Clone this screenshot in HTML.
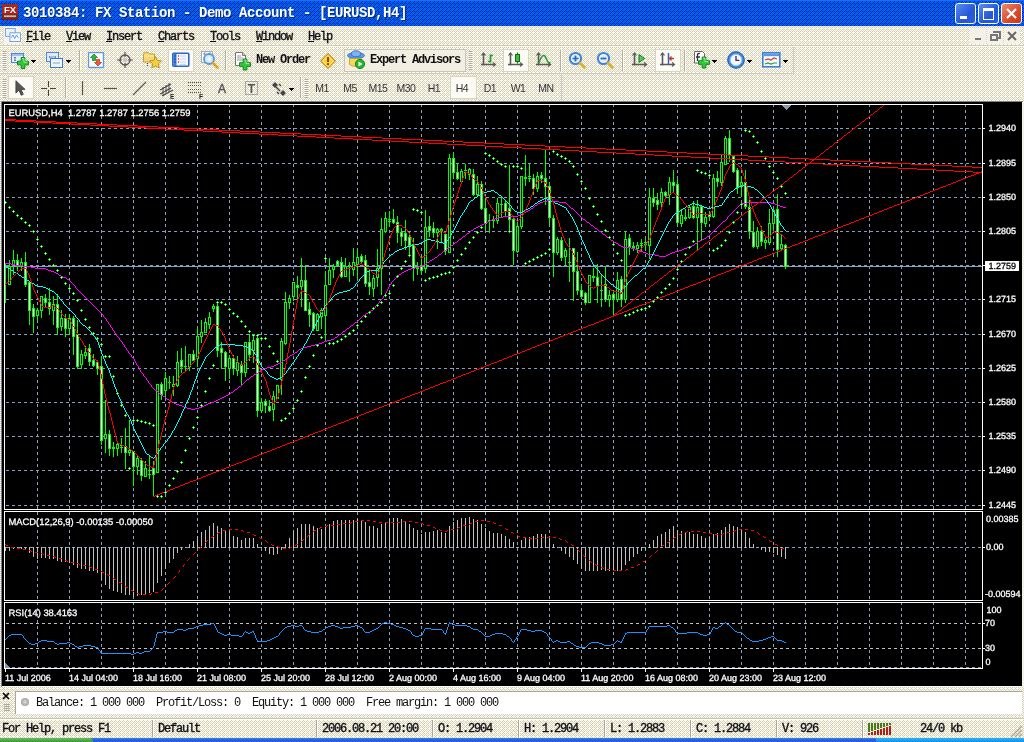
<!DOCTYPE html>
<html><head><meta charset="utf-8"><title>FX Station</title>
<style>
html,body{margin:0;padding:0}
body{width:1024px;height:742px;overflow:hidden;position:relative;background:#ece9d8;font-family:"Liberation Mono",monospace;color:#000}
.abs{position:absolute}
#title{left:0;top:0;width:1024px;height:26px;background:linear-gradient(#3468f4 0,#0a52ea 2px,#034ae6 6px,#0248e2 21px,#0242d4 26px)}
#title .t{left:23px;top:5px;font:bold 14px "Liberation Mono",monospace;letter-spacing:-.4px;color:#fff;white-space:pre;text-shadow:1px 1px 0 #0a2a80}
.wb{top:3px;width:19px;height:19px;border:1px solid #fff;border-radius:3px;background:linear-gradient(135deg,#5d8df0,#2456d8 60%,#2a5ee0)}
.wb.c{background:linear-gradient(135deg,#ee8a6c,#d8492a 60%,#c8381c)}
#menu{left:0;top:26px;width:1024px;height:20px}
#menu span{position:absolute;top:4px;font:12px "Liberation Mono",monospace;letter-spacing:-1.2px;white-space:pre;color:#111;-webkit-text-stroke:.35px #111}
#menu u{text-decoration:underline}
.sepl{left:0;width:1024px;height:1px;background:#fbfaf4}
.sepd{left:0;width:1024px;height:1px;background:#cfcbb8}
.vs{width:1px;height:20px;background:#b5b19f;box-shadow:1px 0 0 #fbfaf4}
.grip{width:3px;height:18px;background:repeating-linear-gradient(#b0ac99 0,#b0ac99 1px,#f8f6ee 1px,#f8f6ee 2px)}
.tx{font:bold 12px "Liberation Mono",monospace;letter-spacing:-1.2px;white-space:pre;color:#111}
.pf{font:10.5px "Liberation Sans",sans-serif;color:#333;white-space:pre}
.press{background:#fcfbf4;border:1px solid #d8d4c4;box-sizing:border-box}
.st{top:722px;font:12px "Liberation Mono",monospace;letter-spacing:-1.2px;white-space:pre;color:#111;-webkit-text-stroke:.35px #111}
.sv{top:720px;width:1px;height:17px;background:#aca899;box-shadow:1px 0 0 #fff}
</style></head><body>
<div id="wrap" style="position:absolute;left:0;top:0;width:1024px;height:742px;will-change:transform">
<svg class="abs" style="left:0;top:0" width="1024" height="742" shape-rendering="crispEdges"><defs><pattern id="dz" x="2" y="0" width="4" height="4" patternUnits="userSpaceOnUse"><rect width="4" height="4" fill="#ccc"/><path d="M0 0h1v1h-1zM2 0h1v1h-1zM0 2h1v1h-1zM2 2h1v1h-1z" fill="#fff"/><path d="M3 0h1v2h-1zM1 1h1v1h-1zM1 3h1v1h-1zM3 3h1v1h-1z" fill="#ffc"/><path d="M1 2h1v1h-1z" fill="#fcc"/></pattern></defs><rect width="1024" height="742" fill="url(#dz)"/></svg>
<div id="title" class="abs">
<svg class="abs" style="left:0;top:0" width="1024" height="26" shape-rendering="crispEdges"><defs><pattern id="tz" x="0" y="1" width="4" height="4" patternUnits="userSpaceOnUse"><rect width="4" height="4" fill="#06f"/><path d="M2 0h1v1h-1zM1 1h1v1h-1zM0 2h1v1h-1zM2 2h1v1h-1zM3 3h1v1h-1z" fill="#0020cc"/><path d="M0 0h1v1h-1zM3 1h1v1h-1zM1 2h1v2h-1z" fill="#0066a8"/></pattern></defs><rect y="1" width="1024" height="25" fill="url(#tz)"/><rect width="1024" height="1" fill="#1a6cff"/><path d="M0 0h1v1h-1z" fill="#66f"/></svg>
 <svg class="abs" style="left:2px;top:4px" width="16" height="16" viewBox="0 0 17 17"><rect width="17" height="17" fill="#7a1d16"/><rect x="0" y="0" width="17" height="11" fill="#a8281c"/><text x="8.5" y="9.5" font-family="Liberation Sans" font-weight="bold" font-size="10" fill="#fff" text-anchor="middle">FX</text><rect x="2" y="12" width="13" height="2" fill="#c9b8b4"/></svg>
 <div class="abs t">3010384: FX Station - Demo Account - [EURUSD,H4]</div>
 <div class="abs wb" style="left:955px"><div class="abs" style="left:4px;top:12px;width:7px;height:3px;background:#fff"></div></div>
 <div class="abs wb" style="left:978px"><div class="abs" style="left:4px;top:4px;width:9px;height:8px;border:1px solid #fff;border-top-width:3px"></div></div>
 <div class="abs wb c" style="left:1001px"><svg width="19" height="19"><path d="M5 5l9 9M14 5l-9 9" stroke="#fff" stroke-width="2.2"/></svg></div>
</div>
<div id="menu" class="abs">
 <div class="abs" style="left:4px;top:1px;width:17px;height:17px;background:#f6f4ec"></div><svg class="abs" style="left:5px;top:2px" width="16" height="14" viewBox="0 0 18 16"><rect x=".5" y=".5" width="11" height="9" fill="#eaf2fc" stroke="#6a9ad8"/><rect x="5.500" y="5.500" width="12" height="10" fill="#f4f8ff" stroke="#6a9ad8"/><path d="M7 11l2-3 2 4 2-4 2 3" stroke="#5a8ad0" fill="none"/></svg>
 <span style="left:26px"><u>F</u>ile</span><span style="left:66px"><u>V</u>iew</span><span style="left:106px"><u>I</u>nsert</span><span style="left:158px"><u>C</u>harts</span><span style="left:210px"><u>T</u>ools</span><span style="left:256px"><u>W</u>indow</span><span style="left:308px"><u>H</u>elp</span>
 <svg class="abs" style="left:968px;top:1px" width="54" height="18" viewBox="0 0 54 18" shape-rendering="crispEdges"><rect x="2" y="1" width="16" height="16" fill="#f4f2e8"/><rect x="19" y="1" width="16" height="16" fill="#f4f2e8"/><rect x="36" y="1" width="16" height="16" fill="#f4f2e8"/><rect x="7" y="11" width="6" height="2" fill="#777"/><path d="M25 5h7v6h-2M23 8h6v5h-6z" fill="none" stroke="#777" stroke-width="1.6"/><path d="M40 5l8 8M48 5l-8 8" stroke="#666" stroke-width="2" shape-rendering="auto"/></svg>
</div>
<div class="abs sepd" style="top:45px"></div><div class="abs sepl" style="top:46px"></div>
<div id="tb1" class="abs" style="left:0;top:47px;width:1024px;height:26px"><div class="abs grip" style="left:3px;top:4px;height:19px"></div><svg class="abs" style="left:11px;top:5px" width="19" height="18" viewBox="0 0 19 18"><rect x=".5" y="1.500" width="12" height="9" fill="#e4effb" stroke="#4c88da"/><rect x="1" y="2" width="11" height="2" fill="#9cc2f0"/><path d="M4 5v4M3 6l1-1 1 1M3 8l1 1 1-1" stroke="#6b7f99" fill="none"/><path transform="translate(6.5 5.5) scale(0.92)" d="M4 0h4v4h4v4h-4v4h-4v-4h-4v-4h4z" fill="#2fca3a" stroke="#0b7d16" stroke-width="1" stroke-linejoin="round"/><path transform="translate(6.5 5.5) scale(0.92)" d="M5 1.200h2v3.800h3.800" fill="none" stroke="#a8f0a8" stroke-width="1"/></svg><svg class="abs" style="left:31px;top:13px" width="5" height="3" shape-rendering="crispEdges"><path d="M0 0h5v1h-5zM1 1h3v1h-3zM2 2h1v1h-1z" fill="#000"/></svg><svg class="abs" style="left:46px;top:5px" width="18" height="18" viewBox="0 0 18 18"><rect x=".5" y=".5" width="12" height="9" fill="#dfeaf8" stroke="#4c88da"/><path d="M3 5h7M3 5l1-1M3 5l1 1M10 5l-1-1M10 5l-1 1" stroke="#7a8eaa" fill="none"/><rect x="4.500" y="6.500" width="12" height="9" fill="#eef4fc" stroke="#3f7ad2"/><path d="M7 11h7" stroke="#8aa0c0"/></svg><svg class="abs" style="left:66px;top:13px" width="5" height="3" shape-rendering="crispEdges"><path d="M0 0h5v1h-5zM1 1h3v1h-3zM2 2h1v1h-1z" fill="#000"/></svg><div class="abs vs" style="left:79px;top:3px;height:21px"></div><svg class="abs" style="left:88px;top:5px" width="17" height="17" viewBox="0 0 17 17"><rect x=".5" y=".5" width="15" height="15" rx="1" fill="#fff" stroke="#5b99e4" stroke-width="1.400"/><path d="M6 2l3.500 3.500h-2v3h-3v-3h-2z" fill="#2fb93a" stroke="#127a1c" stroke-width=".7"/><path d="M10 14l-3.500-3.500h2v-3h3v3h2z" fill="#ee5a3a" stroke="#b0301a" stroke-width=".7"/></svg><svg class="abs" style="left:116px;top:4px" width="18" height="18" viewBox="0 0 18 18"><circle cx="9" cy="9" r="5" fill="none" stroke="#555" stroke-width="1.300"/><path d="M9 1v5M9 12v5M1 9h5M12 9h5" stroke="#555" stroke-width="1.200"/><circle cx="9" cy="9" r="2.200" fill="#c8c8c0"/></svg><svg class="abs" style="left:143px;top:4px" width="20" height="19" viewBox="0 0 20 19"><path d="M.5 3.500q0-2 2-2h3l1.500 1.500h4.500v8h-11z" fill="#f7d774" stroke="#c9a030"/><path d="M1 5h10" stroke="#fbeeb0"/><path d="M4.500 12v4" stroke="#555" stroke-dasharray="1 1"/><path d="M12.500 5.500l1.800 3.900 4.200.5-3.100 2.900.8 4.200-3.700-2.100-3.700 2.100.8-4.200-3.100-2.900 4.200-.5z" fill="#f4cf45" stroke="#b98f1c" stroke-width=".9"/></svg><div class="abs press" style="left:168px;top:2px;width:26px;height:23px"></div><svg class="abs" style="left:172px;top:5px" width="18" height="16" viewBox="0 0 18 16"><rect x=".8" y="1.300" width="16" height="13" rx="1" fill="#f3f7ff" stroke="#2c66cc" stroke-width="1.600"/><rect x="1.500" y="2" width="3" height="12" fill="#3b7bdb"/><path d="M6 4h1M6 7h1M6 10h1" stroke="#e02020" stroke-width="1.300"/><path d="M8.500 4h6M8.500 7h6M8.500 10h6M8.500 12.500h6" stroke="#9cbcf0" stroke-dasharray="1 1"/><path d="M2.500 4h1M2.500 7h1M2.500 10h1" stroke="#123" /></svg><svg class="abs" style="left:200px;top:3px" width="20" height="20" viewBox="0 0 20 20"><rect x="1.500" y="1.500" width="11" height="11" fill="#fcfcfc" stroke="#aaa"/><path d="M3 4h2v-2M10 2v3h2M4 3l1 2M9 3l1 2" stroke="#7a8aa0" fill="none" stroke-width=".8"/><circle cx="9" cy="9" r="5" fill="#cfe5f8" fill-opacity=".85" stroke="#5a9ad8" stroke-width="1.800"/><circle cx="9" cy="9" r="2" fill="#eef6fd"/><path d="M13 13l4.500 4.500" stroke="#d9a521" stroke-width="2.600" stroke-linecap="round"/></svg><div class="abs vs" style="left:225px;top:3px;height:21px"></div><svg class="abs" style="left:234px;top:5px" width="19" height="20" viewBox="0 0 19 20"><path d="M1.500 .5h7l3 3v10h-10z" fill="#fff" stroke="#777"/><path d="M8.500 .5v3h3" fill="#ddd" stroke="#777"/><path d="M3 4h4M3 6h6M3 8h6" stroke="#999"/><path transform="translate(5.5 7) scale(0.92)" d="M4 0h4v4h4v4h-4v4h-4v-4h-4v-4h4z" fill="#2fca3a" stroke="#0b7d16" stroke-width="1" stroke-linejoin="round"/><path transform="translate(5.5 7) scale(0.92)" d="M5 1.200h2v3.800h3.800" fill="none" stroke="#a8f0a8" stroke-width="1"/></svg><div class="abs tx" style="left:256px;top:6px">New Order</div><div class="abs" style="left:320px;top:6px;width:16px;height:16px"><svg class="abs" style="left:0px;top:0px" width="16" height="16" viewBox="0 0 16 16"><g transform="scale(.89)"><path d="M9 .8l8.200 8.200-8.200 8.200-8.200-8.200z" fill="#f9d235" stroke="#c8911a" stroke-width="1.200"/><path d="M9 3l6 6-6 6-6-6z" fill="none" stroke="#fdeea0" stroke-width=".8"/><path d="M9 4.500v5.500" stroke="#7a3d10" stroke-width="2"/><circle cx="9" cy="12.500" r="1.200" fill="#7a3d10"/></g></svg></div><div class="abs" style="left:344px;top:2px;width:122px;height:23px;border:1px solid #c9c5b4;box-sizing:border-box;background:#f1eee2"></div><svg class="abs" style="left:347px;top:3px" width="19" height="20" viewBox="0 0 19 20"><ellipse cx="9" cy="5.500" rx="8.500" ry="3" fill="#5a9be6" stroke="#2c66c0" stroke-width=".8"/><ellipse cx="9" cy="3.800" rx="4.500" ry="3" fill="#7db4f0" stroke="#2c66c0" stroke-width=".8"/><path d="M2.500 8.500h12v6q-6 4-12 0z" fill="#f7d65a" stroke="#c79a1e" stroke-width=".8"/><circle cx="13" cy="14" r="4.600" fill="#22b82e" stroke="#0d7a16" stroke-width=".9"/><path d="M11.500 11.500l4 2.500-4 2.500z" fill="#fff"/></svg><div class="abs tx" style="left:370px;top:6px">Expert Advisors</div><div class="abs grip" style="left:469px;top:4px;height:19px"></div><svg class="abs" style="left:481px;top:5px" width="16" height="16" viewBox="0 0 16 16"><path d="M2.500 1v12.500M0 12.500h14" stroke="#5a5a5a" stroke-width="1.600" fill="none"/><path d="M0.500 3.500l2-2.500 2 2.500M12 10.500l2.500 2-2.500 2" stroke="#5a5a5a" fill="none" stroke-width="1.200"/><path d="M9.500 2.500v8M9.500 3.500h2.500M7 9.500h2.500" stroke="#1f9d27" stroke-width="1.700" fill="none"/></svg><div class="abs press" style="left:503px;top:2px;width:26px;height:23px"></div><svg class="abs" style="left:508px;top:5px" width="16" height="16" viewBox="0 0 16 16"><path d="M2.500 1v12.500M0 12.500h14" stroke="#5a5a5a" stroke-width="1.600" fill="none"/><path d="M0.500 3.500l2-2.500 2 2.500M12 10.500l2.500 2-2.500 2" stroke="#5a5a5a" fill="none" stroke-width="1.200"/><path d="M9.500 .5v11" stroke="#0d6f14" stroke-width="1.200"/><rect x="7.500" y="2.500" width="4" height="7" fill="#36c43e" stroke="#0d6f14"/></svg><svg class="abs" style="left:536px;top:5px" width="16" height="16" viewBox="0 0 16 16"><path d="M2.500 1v12.500M0 12.500h14" stroke="#5a5a5a" stroke-width="1.600" fill="none"/><path d="M0.500 3.500l2-2.500 2 2.500M12 10.500l2.500 2-2.500 2" stroke="#5a5a5a" fill="none" stroke-width="1.200"/><path d="M3 11q4-12 7-5t4 4" stroke="#1f9d27" stroke-width="1.500" fill="none"/></svg><div class="abs vs" style="left:560px;top:3px;height:21px"></div><svg class="abs" style="left:568px;top:4px" width="19" height="19" viewBox="0 0 19 19"><circle cx="7.500" cy="7.500" r="5.600" fill="#d5eafc" stroke="#3f83d6" stroke-width="2"/><circle cx="7.500" cy="7.500" r="3.800" fill="none" stroke="#fff" stroke-width=".8"/><path d="M4.500 7.500h6M7.500 4.500v6" stroke="#2c66c0" stroke-width="1.700"/><path d="M12 12l4.500 4.500" stroke="#e2b02a" stroke-width="2.800" stroke-linecap="round"/></svg><svg class="abs" style="left:596px;top:4px" width="19" height="19" viewBox="0 0 19 19"><circle cx="7.500" cy="7.500" r="5.600" fill="#d5eafc" stroke="#3f83d6" stroke-width="2"/><circle cx="7.500" cy="7.500" r="3.800" fill="none" stroke="#fff" stroke-width=".8"/><path d="M4.500 7.500h6" stroke="#2c66c0" stroke-width="1.700"/><path d="M12 12l4.500 4.500" stroke="#e2b02a" stroke-width="2.800" stroke-linecap="round"/></svg><div class="abs vs" style="left:622px;top:3px;height:21px"></div><svg class="abs" style="left:632px;top:5px" width="16" height="16" viewBox="0 0 16 16"><path d="M2.500 1v12.500M0 12.500h14" stroke="#5a5a5a" stroke-width="1.600" fill="none"/><path d="M0.500 3.500l2-2.500 2 2.500M12 10.500l2.500 2-2.500 2" stroke="#5a5a5a" fill="none" stroke-width="1.200"/><path d="M7 2.500l5.500 4-5.500 4z" fill="#4fcf57" stroke="#0d7a16" stroke-width="1"/></svg><div class="abs press" style="left:655px;top:2px;width:26px;height:23px"></div><svg class="abs" style="left:660px;top:5px" width="16" height="16" viewBox="0 0 16 16"><path d="M2.500 1v12.500M0 12.500h14" stroke="#5a5a5a" stroke-width="1.600" fill="none"/><path d="M0.500 3.500l2-2.500 2 2.500M12 10.500l2.500 2-2.500 2" stroke="#5a5a5a" fill="none" stroke-width="1.200"/><path d="M8.500 1v11" stroke="#2c66c0" stroke-width="1.500"/><path d="M14 6.500h-4.500M11.500 4.500l-2 2 2 2" stroke="#d03818" stroke-width="1.300" fill="none"/></svg><div class="abs vs" style="left:684px;top:3px;height:21px"></div><svg class="abs" style="left:693px;top:3px" width="19" height="20" viewBox="0 0 19 20"><path d="M1.500 1.500h8l2 2v9.500h-10z" fill="#fff" stroke="#666"/><path d="M4.500 11v-6q0-2 2.500-1.500M3 7h4" stroke="#333" fill="none" stroke-width="1.300"/><path transform="translate(5.5 7) scale(0.92)" d="M4 0h4v4h4v4h-4v4h-4v-4h-4v-4h4z" fill="#2fca3a" stroke="#0b7d16" stroke-width="1" stroke-linejoin="round"/><path transform="translate(5.5 7) scale(0.92)" d="M5 1.200h2v3.800h3.800" fill="none" stroke="#a8f0a8" stroke-width="1"/></svg><svg class="abs" style="left:712px;top:13px" width="5" height="3" shape-rendering="crispEdges"><path d="M0 0h5v1h-5zM1 1h3v1h-3zM2 2h1v1h-1z" fill="#000"/></svg><svg class="abs" style="left:727px;top:4px" width="19" height="19" viewBox="0 0 19 19"><circle cx="9" cy="9" r="8.300" fill="#3f86de" stroke="#1d55b4" stroke-width="1"/><circle cx="9" cy="9" r="5.800" fill="#f4f8fd" stroke="#9cc4f2" stroke-width="1"/><path d="M9 5v4.300h3.300" stroke="#333" stroke-width="1.300" fill="none"/></svg><svg class="abs" style="left:747px;top:13px" width="5" height="3" shape-rendering="crispEdges"><path d="M0 0h5v1h-5zM1 1h3v1h-3zM2 2h1v1h-1z" fill="#000"/></svg><svg class="abs" style="left:762px;top:5px" width="19" height="16" viewBox="0 0 19 16"><rect x=".8" y=".8" width="17" height="14" fill="#f2f7fd" stroke="#3f7fd8" stroke-width="1.600"/><rect x="1.600" y="1.600" width="15.500" height="2.500" fill="#5c9ae6"/><path d="M3 8l3-1 3 1 3-2 3 1" stroke="#d04028" fill="none" stroke-width="1.200"/><path d="M3 12l3-1 3 1 3-1 3 0" stroke="#2a9a34" fill="none" stroke-width="1.200"/></svg><svg class="abs" style="left:783px;top:13px" width="5" height="3" shape-rendering="crispEdges"><path d="M0 0h5v1h-5zM1 1h3v1h-3zM2 2h1v1h-1z" fill="#000"/></svg><div class="abs" style="left:793px;top:0;width:1px;height:26px;background:#cfcbb8"></div></div>
<div class="abs sepd" style="top:73px;width:794px"></div>
<div id="tb2" class="abs" style="left:0;top:74px;width:1024px;height:27px"><div class="abs grip" style="left:3px;top:5px;height:19px"></div><div class="abs press" style="left:8px;top:2px;width:26px;height:23px"></div><svg class="abs" style="left:14px;top:6px" width="12" height="17" viewBox="0 0 12 17"><path d="M2 .8v13l3.200-3 2.400 5.300 2.200-1-2.400-5.200h4.300z" fill="#555" stroke="#333" stroke-width=".8" transform="scale(.95)"/></svg><svg class="abs" style="left:40px;top:6px" width="17" height="17" viewBox="0 0 17 17"><path d="M8.500 1v6M8.500 10v6M1 8.500h6M10 8.500h6" stroke="#444" stroke-width="1.100"/></svg><div class="abs vs" style="left:65px;top:3px;height:21px"></div><svg class="abs" style="left:78px;top:6px" width="9" height="17" viewBox="0 0 9 17"><path d="M4.500 1v14" stroke="#555" stroke-width="1.200"/></svg><svg class="abs" style="left:103px;top:11px" width="16" height="7" viewBox="0 0 16 7"><path d="M1 3.500h13" stroke="#555" stroke-width="1.200"/></svg><svg class="abs" style="left:132px;top:7px" width="16" height="15" viewBox="0 0 16 15"><path d="M1 14l13-13" stroke="#555" stroke-width="1.300"/></svg><svg class="abs" style="left:158px;top:6px" width="20" height="20" viewBox="0 0 20 20"><path d="M2 10l11-6M2 14l11-6M4 16l11-6" stroke="#444" stroke-width="1.100"/><path d="M5 7v9M8 5v9M11 3v9" stroke="#444" stroke-width=".9"/><text x="12" y="18.500" font-family="Liberation Sans" font-weight="bold" font-size="6.500" fill="#222">E</text></svg><svg class="abs" style="left:187px;top:7px" width="20" height="19" viewBox="0 0 20 19"><path d="M1 1.500h13M1 4.500h13M1 8.500h13M1 11.500h13" stroke="#555" stroke-width="1" stroke-dasharray="1 1"/><text x="12" y="17.500" font-family="Liberation Sans" font-weight="bold" font-size="6.500" fill="#222">F</text></svg><div class="abs" style="left:218px;top:8px;font:12px 'Liberation Sans',sans-serif;color:#555;-webkit-text-stroke:.4px #555">A</div><svg class="abs" style="left:245px;top:7px" width="13" height="14" viewBox="0 0 13 14"><rect x=".5" y=".5" width="12" height="13" fill="none" stroke="#666" stroke-dasharray="1 1"/><text x="6.500" y="11.500" text-anchor="middle" font-family="Liberation Sans" font-weight="bold" font-size="12" fill="#555">T</text></svg><svg class="abs" style="left:271px;top:8px" width="16" height="14" viewBox="0 0 16 14"><path d="M4 0l3 3-3 3-3-3zM12 8l3 3-3 3-3-3z" fill="#444"/><path d="M5 5l4 4M8 2l2 2M6 10l2 2" stroke="#444" stroke-width="1.500"/></svg><svg class="abs" style="left:289px;top:14px" width="5" height="3" shape-rendering="crispEdges"><path d="M0 0h5v1h-5zM1 1h3v1h-3zM2 2h1v1h-1z" fill="#000"/></svg><div class="abs vs" style="left:300px;top:3px;height:21px"></div><div class="abs grip" style="left:305px;top:5px;height:19px"></div><div class="abs pf" style="left:308px;top:8px;width:28px;text-align:center;letter-spacing:-.5px">M1</div><div class="abs pf" style="left:336px;top:8px;width:28px;text-align:center;letter-spacing:-.5px">M5</div><div class="abs pf" style="left:364px;top:8px;width:28px;text-align:center;letter-spacing:-.5px">M15</div><div class="abs pf" style="left:392px;top:8px;width:28px;text-align:center;letter-spacing:-.5px">M30</div><div class="abs pf" style="left:420px;top:8px;width:28px;text-align:center;letter-spacing:-.5px">H1</div><div class="abs press" style="left:450px;top:2px;width:27px;height:23px"></div><div class="abs pf" style="left:448px;top:8px;width:28px;text-align:center;letter-spacing:-.5px">H4</div><div class="abs pf" style="left:476px;top:8px;width:28px;text-align:center;letter-spacing:-.5px">D1</div><div class="abs pf" style="left:504px;top:8px;width:28px;text-align:center;letter-spacing:-.5px">W1</div><div class="abs pf" style="left:532px;top:8px;width:28px;text-align:center;letter-spacing:-.5px">MN</div><div class="abs" style="left:561px;top:1px;width:1px;height:26px;background:#cfcbb8"></div></div>
<svg width="1024" height="742" viewBox="0 0 1024 742" style="position:absolute;left:0;top:0;will-change:transform" shape-rendering="crispEdges" font-family="Liberation Sans, sans-serif" font-size="9.4px">
<rect x="1" y="101" width="1022" height="586" fill="#808080"/>
<rect x="2" y="102" width="1020" height="584" fill="#000"/>
<rect x="2" y="686" width="1022" height="1" fill="#fff"/>
<rect x="1022" y="102" width="2" height="585" fill="#f4f2e8"/>
<defs><clipPath id="cf"><rect x="5" y="105" width="977" height="404"/><rect x="5" y="512" width="977" height="88"/><rect x="5" y="603" width="977" height="65"/></clipPath><clipPath id="cm"><rect x="5" y="105" width="977" height="404"/></clipPath></defs>
<g clip-path="url(#cf)" stroke="#869ec2" stroke-width="1" stroke-dasharray="3 3" fill="none">
<line x1="37.5" y1="104" x2="37.5" y2="670"/>
<line x1="69.5" y1="104" x2="69.5" y2="670"/>
<line x1="101.5" y1="104" x2="101.5" y2="670"/>
<line x1="133.5" y1="104" x2="133.5" y2="670"/>
<line x1="165.5" y1="104" x2="165.5" y2="670"/>
<line x1="197.5" y1="104" x2="197.5" y2="670"/>
<line x1="229.5" y1="104" x2="229.5" y2="670"/>
<line x1="261.5" y1="104" x2="261.5" y2="670"/>
<line x1="293.5" y1="104" x2="293.5" y2="670"/>
<line x1="325.5" y1="104" x2="325.5" y2="670"/>
<line x1="357.5" y1="104" x2="357.5" y2="670"/>
<line x1="389.5" y1="104" x2="389.5" y2="670"/>
<line x1="421.5" y1="104" x2="421.5" y2="670"/>
<line x1="453.5" y1="104" x2="453.5" y2="670"/>
<line x1="485.5" y1="104" x2="485.5" y2="670"/>
<line x1="517.5" y1="104" x2="517.5" y2="670"/>
<line x1="549.5" y1="104" x2="549.5" y2="670"/>
<line x1="581.5" y1="104" x2="581.5" y2="670"/>
<line x1="613.5" y1="104" x2="613.5" y2="670"/>
<line x1="645.5" y1="104" x2="645.5" y2="670"/>
<line x1="677.5" y1="104" x2="677.5" y2="670"/>
<line x1="709.5" y1="104" x2="709.5" y2="670"/>
<line x1="741.5" y1="104" x2="741.5" y2="670"/>
<line x1="773.5" y1="104" x2="773.5" y2="670"/>
<line x1="805.5" y1="104" x2="805.5" y2="670"/>
<line x1="837.5" y1="104" x2="837.5" y2="670"/>
<line x1="869.5" y1="104" x2="869.5" y2="670"/>
<line x1="901.5" y1="104" x2="901.5" y2="670"/>
<line x1="933.5" y1="104" x2="933.5" y2="670"/>
<line x1="965.5" y1="104" x2="965.5" y2="670"/>
<line x1="0" y1="128.5" x2="990" y2="128.5"/>
<line x1="0" y1="163.5" x2="990" y2="163.5"/>
<line x1="0" y1="197.5" x2="990" y2="197.5"/>
<line x1="0" y1="231.5" x2="990" y2="231.5"/>
<line x1="0" y1="265.5" x2="990" y2="265.5"/>
<line x1="0" y1="299.5" x2="990" y2="299.5"/>
<line x1="0" y1="334.5" x2="990" y2="334.5"/>
<line x1="0" y1="368.5" x2="990" y2="368.5"/>
<line x1="0" y1="402.5" x2="990" y2="402.5"/>
<line x1="0" y1="436.5" x2="990" y2="436.5"/>
<line x1="0" y1="470.5" x2="990" y2="470.5"/>
<line x1="0" y1="505.5" x2="990" y2="505.5"/>
<line x1="0" y1="547.5" x2="990" y2="547.5"/>
<line x1="0" y1="667.5" x2="990" y2="667.5"/>
</g>
<g clip-path="url(#cf)" stroke="#c0c0c0" stroke-width="1" stroke-dasharray="3 3" fill="none"><line x1="0" y1="623.5" x2="990" y2="623.5"/><line x1="0" y1="648.5" x2="990" y2="648.5"/></g>
<path fill="#fff" d="M4 104h979v1h-979zM4 509h979v1h-979zM4 104h1v406h-1zM982 104h1v406h-1zM4 511h979v1h-979zM4 600h979v1h-979zM4 511h1v90h-1zM982 511h1v90h-1zM4 602h979v1h-979zM4 668h979v1h-979zM4 602h1v67h-1zM982 602h1v67h-1zM983 128h2v1h-2zM983 163h2v1h-2zM983 197h2v1h-2zM983 231h2v1h-2zM983 265h2v1h-2zM983 299h2v1h-2zM983 334h2v1h-2zM983 368h2v1h-2zM983 402h2v1h-2zM983 436h2v1h-2zM983 470h2v1h-2zM983 505h2v1h-2zM983 547h2v1h-2zM983 623h2v1h-2zM983 648h2v1h-2zM5 669h1v3h-1zM69 669h1v3h-1zM133 669h1v3h-1zM197 669h1v3h-1zM261 669h1v3h-1zM325 669h1v3h-1zM389 669h1v3h-1zM453 669h1v3h-1zM517 669h1v3h-1zM581 669h1v3h-1zM645 669h1v3h-1zM709 669h1v3h-1zM773 669h1v3h-1z"/>
<path fill="#869ec2" d="M5 266h977v1h-977z"/>
<path fill="#c0c0c0" d="M5 547h1v4h-1zM9 547h1v4h-1zM13 547h1v2h-1zM17 547h1v2h-1zM21 547h1v2h-1zM25 547h1v3h-1zM29 547h1v6h-1zM33 547h1v10h-1zM37 547h1v12h-1zM41 547h1v11h-1zM45 547h1v11h-1zM49 547h1v12h-1zM53 547h1v12h-1zM57 547h1v14h-1zM61 547h1v15h-1zM65 547h1v15h-1zM69 547h1v16h-1zM73 547h1v18h-1zM77 547h1v21h-1zM81 547h1v22h-1zM85 547h1v22h-1zM89 547h1v24h-1zM93 547h1v24h-1zM97 547h1v26h-1zM101 547h1v33h-1zM105 547h1v38h-1zM109 547h1v42h-1zM113 547h1v44h-1zM117 547h1v45h-1zM121 547h1v46h-1zM125 547h1v48h-1zM129 547h1v48h-1zM133 547h1v50h-1zM137 547h1v49h-1zM141 547h1v48h-1zM145 547h1v48h-1zM149 547h1v46h-1zM153 547h1v45h-1zM157 547h1v36h-1zM161 547h1v29h-1zM165 547h1v22h-1zM169 547h1v16h-1zM173 547h1v12h-1zM177 547h1v6h-1zM181 547h1v3h-1zM185 547h1v1h-1zM189 544h1v4h-1zM193 541h1v7h-1zM197 536h1v12h-1zM201 532h1v16h-1zM205 530h1v18h-1zM209 526h1v22h-1zM213 523h1v25h-1zM217 526h1v22h-1zM221 528h1v20h-1zM225 530h1v18h-1zM229 531h1v17h-1zM233 536h1v12h-1zM237 537h1v11h-1zM241 540h1v8h-1zM245 538h1v10h-1zM249 538h1v10h-1zM253 538h1v10h-1zM257 544h1v4h-1zM261 547h1v1h-1zM265 547h1v4h-1zM269 547h1v7h-1zM273 547h1v8h-1zM277 547h1v7h-1zM281 547h1v3h-1zM285 544h1v4h-1zM289 538h1v10h-1zM293 531h1v17h-1zM297 528h1v20h-1zM301 524h1v24h-1zM305 524h1v24h-1zM309 524h1v24h-1zM313 526h1v22h-1zM317 528h1v20h-1zM321 529h1v19h-1zM325 526h1v22h-1zM329 524h1v24h-1zM333 521h1v27h-1zM337 520h1v28h-1zM341 520h1v28h-1zM345 520h1v28h-1zM349 520h1v28h-1zM353 520h1v28h-1zM357 519h1v29h-1zM361 520h1v28h-1zM365 522h1v26h-1zM369 526h1v22h-1zM373 526h1v22h-1zM377 528h1v20h-1zM381 524h1v24h-1zM385 522h1v26h-1zM389 519h1v29h-1zM393 518h1v30h-1zM397 518h1v30h-1zM401 519h1v29h-1zM405 521h1v27h-1zM409 524h1v24h-1zM413 528h1v20h-1zM417 530h1v18h-1zM421 534h1v14h-1zM425 532h1v16h-1zM429 532h1v16h-1zM433 531h1v17h-1zM437 530h1v18h-1zM441 532h1v16h-1zM445 533h1v15h-1zM449 526h1v22h-1zM453 522h1v26h-1zM457 520h1v28h-1zM461 518h1v30h-1zM465 518h1v30h-1zM469 517h1v31h-1zM473 519h1v29h-1zM477 520h1v28h-1zM481 524h1v24h-1zM485 528h1v20h-1zM489 531h1v17h-1zM493 533h1v15h-1zM497 533h1v15h-1zM501 534h1v14h-1zM505 536h1v12h-1zM509 539h1v9h-1zM513 542h1v6h-1zM517 547h1v1h-1zM521 540h1v8h-1zM525 538h1v10h-1zM529 537h1v11h-1zM533 536h1v12h-1zM537 534h1v14h-1zM541 534h1v14h-1zM545 534h1v14h-1zM549 538h1v10h-1zM553 544h1v4h-1zM557 547h1v1h-1zM561 547h1v4h-1zM565 547h1v7h-1zM569 547h1v10h-1zM573 547h1v13h-1zM577 547h1v17h-1zM581 547h1v22h-1zM585 547h1v24h-1zM589 547h1v24h-1zM593 547h1v24h-1zM597 547h1v24h-1zM601 547h1v23h-1zM605 547h1v24h-1zM609 547h1v24h-1zM613 547h1v24h-1zM617 547h1v24h-1zM621 547h1v23h-1zM625 547h1v18h-1zM629 547h1v14h-1zM633 547h1v10h-1zM637 547h1v7h-1zM641 547h1v4h-1zM645 547h1v3h-1zM649 544h1v4h-1zM653 540h1v8h-1zM657 536h1v12h-1zM661 534h1v14h-1zM665 532h1v16h-1zM669 529h1v19h-1zM673 526h1v22h-1zM677 530h1v18h-1zM681 531h1v17h-1zM685 532h1v16h-1zM689 532h1v16h-1zM693 534h1v14h-1zM697 534h1v14h-1zM701 536h1v12h-1zM705 538h1v10h-1zM709 537h1v11h-1zM713 534h1v14h-1zM717 533h1v15h-1zM721 530h1v18h-1zM725 527h1v21h-1zM729 524h1v24h-1zM733 526h1v22h-1zM737 527h1v21h-1zM741 529h1v19h-1zM745 532h1v16h-1zM749 538h1v10h-1zM753 544h1v4h-1zM757 547h1v1h-1zM761 547h1v3h-1zM765 547h1v5h-1zM769 547h1v5h-1zM773 547h1v6h-1zM777 547h1v8h-1zM781 547h1v10h-1zM785 547h1v12h-1z"/>
<path fill="#00ff00" d="M5 264h1v39h-1zM9 260h1v25h-1zM8 266h3v19h-3zM13 250h1v25h-1zM12 260h3v5h-3zM17 254h1v17h-1zM16 260h3v7h-3zM21 258h1v13h-1zM20 262h3v5h-3zM25 252h1v35h-1zM24 262h3v23h-3zM29 282h1v43h-1zM28 282h3v29h-3zM33 304h1v29h-1zM32 308h3v9h-3zM37 308h1v13h-1zM36 310h3v6h-3zM41 296h1v22h-1zM40 296h3v15h-3zM45 294h1v14h-1zM44 298h3v5h-3zM49 288h1v27h-1zM48 302h3v7h-3zM53 296h1v29h-1zM52 304h3v7h-3zM57 294h1v41h-1zM56 304h3v24h-3zM61 310h1v21h-1zM60 318h3v9h-3zM65 314h1v23h-1zM64 318h3v11h-3zM69 314h1v21h-1zM68 318h3v11h-3zM73 316h1v39h-1zM72 318h3v19h-3zM77 320h1v49h-1zM76 334h3v33h-3zM81 350h1v19h-1zM80 354h3v11h-3zM85 346h1v13h-1zM84 352h3v4h-3zM89 344h1v22h-1zM88 348h3v14h-3zM93 354h1v13h-1zM92 360h3v6h-3zM97 360h1v15h-1zM96 362h3v7h-3zM101 356h1v89h-1zM100 366h3v75h-3zM105 400h1v53h-1zM104 434h3v5h-3zM109 430h1v26h-1zM108 434h3v15h-3zM113 442h1v15h-1zM112 447h3v1h-3zM112 448h3v1h-3zM117 442h1v14h-1zM116 444h3v5h-3zM121 438h1v15h-1zM120 445h3v1h-3zM120 447h3v1h-3zM125 428h1v41h-1zM124 446h3v7h-3zM129 420h1v36h-1zM128 450h3v3h-3zM133 451h1v35h-1zM132 451h3v16h-3zM137 455h1v20h-1zM136 458h3v9h-3zM141 458h1v23h-1zM140 460h3v16h-3zM145 461h1v16h-1zM144 468h3v9h-3zM149 455h1v24h-1zM148 470h3v1h-3zM148 474h3v1h-3zM153 461h1v36h-1zM152 468h3v7h-3zM157 384h1v89h-1zM156 384h3v89h-3zM161 382h1v18h-1zM160 384h3v11h-3zM165 372h1v25h-1zM164 378h3v13h-3zM169 376h1v13h-1zM168 382h3v1h-3zM173 376h1v20h-1zM172 384h3v3h-3zM177 351h1v36h-1zM176 362h3v24h-3zM181 348h1v25h-1zM180 360h3v7h-3zM185 346h1v25h-1zM184 366h3v1h-3zM189 354h1v17h-1zM188 354h3v13h-3zM193 350h1v11h-1zM192 354h3v7h-3zM197 328h1v39h-1zM196 336h3v23h-3zM201 320h1v23h-1zM200 332h3v5h-3zM205 318h1v15h-1zM204 322h3v11h-3zM209 312h1v17h-1zM208 317h3v8h-3zM213 304h1v8h-1zM212 306h3v3h-3zM217 302h1v55h-1zM216 306h3v45h-3zM221 342h1v27h-1zM220 348h3v5h-3zM225 351h1v30h-1zM224 352h3v15h-3zM229 355h1v24h-1zM228 358h3v11h-3zM233 355h1v20h-1zM232 358h3v11h-3zM237 356h1v20h-1zM236 362h3v9h-3zM241 361h1v25h-1zM240 364h3v9h-3zM245 342h1v35h-1zM244 342h3v31h-3zM249 334h1v27h-1zM248 342h3v13h-3zM253 337h1v26h-1zM252 340h3v11h-3zM257 337h1v80h-1zM256 338h3v73h-3zM261 398h1v15h-1zM260 402h3v9h-3zM265 399h1v14h-1zM264 401h3v5h-3zM269 400h1v12h-1zM268 406h3v5h-3zM273 391h1v30h-1zM272 396h3v14h-3zM277 385h1v14h-1zM276 385h3v14h-3zM281 338h1v57h-1zM280 341h3v39h-3zM285 292h1v53h-1zM284 302h3v42h-3zM289 295h1v14h-1zM288 298h3v5h-3zM293 282h1v19h-1zM292 282h3v15h-3zM297 276h1v23h-1zM296 285h3v3h-3zM301 258h1v49h-1zM300 280h3v7h-3zM305 265h1v46h-1zM304 280h3v31h-3zM309 302h1v25h-1zM308 309h3v6h-3zM313 312h1v19h-1zM312 313h3v16h-3zM317 313h1v18h-1zM316 314h3v17h-3zM321 308h1v21h-1zM320 310h3v7h-3zM325 271h1v71h-1zM324 285h3v31h-3zM329 258h1v27h-1zM328 270h3v15h-3zM333 264h1v14h-1zM332 266h3v4h-3zM337 260h1v7h-1zM336 261h3v4h-3zM341 257h1v21h-1zM340 262h3v15h-3zM345 258h1v19h-1zM344 266h3v11h-3zM349 262h1v20h-1zM348 266h3v1h-3zM348 268h3v1h-3zM353 248h1v28h-1zM352 262h3v8h-3zM357 249h1v30h-1zM356 257h3v8h-3zM361 254h1v9h-1zM360 256h3v6h-3zM365 255h1v32h-1zM364 260h3v24h-3zM369 271h1v24h-1zM368 282h3v5h-3zM373 275h1v22h-1zM372 278h3v11h-3zM377 249h1v38h-1zM376 268h3v10h-3zM381 218h1v77h-1zM380 229h3v40h-3zM385 212h1v21h-1zM384 218h3v14h-3zM389 211h1v16h-1zM388 219h3v1h-3zM388 221h3v1h-3zM393 209h1v15h-1zM392 219h3v4h-3zM397 216h1v27h-1zM396 222h3v11h-3zM401 228h1v18h-1zM400 232h3v5h-3zM405 220h1v30h-1zM404 233h3v8h-3zM409 232h1v24h-1zM408 237h3v9h-3zM413 238h1v43h-1zM412 244h3v25h-3zM417 262h1v13h-1zM416 266h3v1h-3zM416 268h3v1h-3zM421 256h1v19h-1zM420 266h3v5h-3zM425 210h1v63h-1zM424 227h3v42h-3zM429 216h1v21h-1zM428 226h3v5h-3zM433 222h1v16h-1zM432 228h3v5h-3zM437 228h1v21h-1zM436 229h3v4h-3zM441 228h1v15h-1zM440 229h3v3h-3zM445 232h1v23h-1zM444 234h3v17h-3zM449 154h1v99h-1zM448 158h3v95h-3zM453 152h1v27h-1zM452 158h3v15h-3zM457 164h1v16h-1zM456 172h3v7h-3zM461 169h1v14h-1zM460 171h3v11h-3zM465 164h1v15h-1zM464 170h3v1h-3zM464 172h3v1h-3zM469 168h1v12h-1zM468 169h3v6h-3zM473 169h1v27h-1zM472 174h3v21h-3zM477 176h1v20h-1zM476 184h3v11h-3zM481 181h1v29h-1zM480 184h3v25h-3zM485 196h1v34h-1zM484 208h3v16h-3zM489 214h1v19h-1zM488 220h3v1h-3zM493 216h1v12h-1zM492 220h3v1h-3zM497 198h1v26h-1zM496 203h3v18h-3zM501 197h1v20h-1zM500 204h3v1h-3zM505 200h1v17h-1zM504 203h3v9h-3zM509 165h1v68h-1zM508 208h3v12h-3zM513 218h1v47h-1zM512 219h3v32h-3zM517 222h1v31h-1zM516 226h3v26h-3zM521 176h1v53h-1zM520 176h3v51h-3zM525 155h1v31h-1zM524 177h3v1h-3zM524 178h3v1h-3zM529 164h1v18h-1zM528 176h3v1h-3zM528 178h3v1h-3zM533 174h1v21h-1zM532 178h3v11h-3zM537 172h1v20h-1zM536 176h3v13h-3zM541 172h1v11h-1zM540 175h3v4h-3zM545 150h1v55h-1zM544 178h3v9h-3zM549 182h1v43h-1zM548 186h3v32h-3zM553 215h1v62h-1zM552 218h3v35h-3zM557 237h1v18h-1zM556 239h3v14h-3zM561 237h1v24h-1zM560 240h3v18h-3zM565 248h1v17h-1zM564 250h3v7h-3zM569 238h1v44h-1zM568 262h3v1h-3zM573 248h1v53h-1zM572 248h3v24h-3zM577 252h1v43h-1zM576 271h3v20h-3zM581 284h1v15h-1zM580 290h3v7h-3zM585 292h1v13h-1zM584 293h3v10h-3zM589 275h1v28h-1zM588 275h3v28h-3zM593 268h1v14h-1zM592 276h3v1h-3zM592 277h3v1h-3zM597 264h1v39h-1zM596 277h3v9h-3zM601 275h1v32h-1zM600 290h3v1h-3zM605 266h1v36h-1zM604 284h3v16h-3zM609 290h1v17h-1zM608 295h3v5h-3zM613 290h1v26h-1zM612 294h3v5h-3zM617 272h1v30h-1zM616 280h3v20h-3zM621 276h1v31h-1zM620 279h3v21h-3zM625 231h1v72h-1zM624 239h3v61h-3zM629 234h1v21h-1zM628 238h3v9h-3zM633 242h1v9h-1zM632 246h3v1h-3zM632 247h3v1h-3zM637 242h1v11h-1zM636 245h3v4h-3zM641 239h1v13h-1zM640 243h3v1h-3zM640 245h3v1h-3zM645 238h1v12h-1zM644 242h3v1h-3zM644 244h3v1h-3zM649 188h1v71h-1zM648 197h3v49h-3zM653 188h1v19h-1zM652 198h3v5h-3zM657 193h1v17h-1zM656 200h3v5h-3zM661 188h1v20h-1zM660 192h3v11h-3zM665 191h1v8h-1zM664 192h3v4h-3zM669 177h1v28h-1zM668 182h3v13h-3zM673 170h1v22h-1zM672 182h3v4h-3zM677 178h1v47h-1zM676 184h3v39h-3zM681 209h1v18h-1zM680 215h3v9h-3zM685 209h1v12h-1zM684 217h3v1h-3zM684 218h3v1h-3zM689 206h1v13h-1zM688 207h3v11h-3zM693 201h1v18h-1zM692 206h3v12h-3zM697 200h1v51h-1zM696 207h3v11h-3zM701 205h1v36h-1zM700 206h3v17h-3zM705 212h1v15h-1zM704 217h3v7h-3zM709 211h1v8h-1zM708 214h3v3h-3zM713 174h1v44h-1zM712 178h3v39h-3zM717 171h1v16h-1zM716 178h3v4h-3zM721 154h1v32h-1zM720 162h3v21h-3zM725 136h1v29h-1zM724 138h3v27h-3zM729 130h1v32h-1zM728 138h3v17h-3zM733 155h1v18h-1zM732 156h3v16h-3zM737 168h1v26h-1zM736 170h3v18h-3zM741 176h1v21h-1zM740 182h3v4h-3zM745 170h1v39h-1zM744 182h3v25h-3zM749 198h1v41h-1zM748 207h3v25h-3zM753 221h1v27h-1zM752 232h3v15h-3zM757 227h1v22h-1zM756 231h3v16h-3zM761 226h1v20h-1zM760 231h3v11h-3zM765 238h1v11h-1zM764 240h3v3h-3zM769 209h1v36h-1zM768 223h3v20h-3zM773 209h1v21h-1zM772 210h3v14h-3zM777 194h1v63h-1zM776 209h3v41h-3zM781 235h1v15h-1zM780 244h3v5h-3zM785 244h1v25h-1zM784 245h3v22h-3z"/>
<path fill="#000" d="M9 267h1v17h-1zM13 261h1v3h-1zM21 263h1v3h-1zM37 311h1v4h-1zM41 297h1v13h-1zM53 305h1v5h-1zM61 319h1v7h-1zM69 319h1v9h-1zM81 355h1v9h-1zM85 353h1v2h-1zM105 435h1v3h-1zM117 445h1v3h-1zM129 451h1v1h-1zM137 459h1v7h-1zM145 469h1v7h-1zM157 385h1v87h-1zM165 379h1v11h-1zM173 385h1v1h-1zM177 363h1v22h-1zM189 355h1v11h-1zM197 337h1v21h-1zM201 333h1v3h-1zM205 323h1v9h-1zM209 318h1v6h-1zM213 307h1v1h-1zM229 359h1v9h-1zM237 363h1v7h-1zM245 343h1v29h-1zM253 341h1v9h-1zM261 403h1v7h-1zM273 397h1v12h-1zM277 386h1v12h-1zM281 342h1v37h-1zM285 303h1v40h-1zM289 299h1v3h-1zM293 283h1v13h-1zM301 281h1v5h-1zM317 315h1v15h-1zM321 311h1v5h-1zM325 286h1v29h-1zM329 271h1v13h-1zM333 267h1v2h-1zM345 267h1v9h-1zM353 263h1v6h-1zM357 258h1v6h-1zM373 279h1v9h-1zM377 269h1v8h-1zM381 230h1v38h-1zM385 219h1v12h-1zM425 228h1v40h-1zM437 230h1v2h-1zM441 230h1v1h-1zM449 159h1v93h-1zM461 172h1v9h-1zM469 170h1v4h-1zM477 185h1v9h-1zM497 204h1v16h-1zM517 227h1v24h-1zM521 177h1v49h-1zM537 177h1v11h-1zM557 240h1v12h-1zM565 251h1v5h-1zM589 276h1v26h-1zM609 296h1v3h-1zM617 281h1v18h-1zM625 240h1v59h-1zM637 246h1v2h-1zM649 198h1v47h-1zM661 193h1v9h-1zM669 183h1v11h-1zM681 216h1v7h-1zM689 208h1v9h-1zM697 208h1v9h-1zM705 218h1v5h-1zM713 179h1v37h-1zM721 163h1v19h-1zM725 139h1v25h-1zM741 183h1v2h-1zM757 232h1v14h-1zM765 241h1v1h-1zM769 224h1v18h-1zM773 211h1v12h-1zM781 245h1v3h-1z"/>
<path fill="#fff" d="M17 261h1v5h-1zM25 263h1v21h-1zM29 283h1v27h-1zM33 309h1v7h-1zM45 299h1v3h-1zM49 303h1v5h-1zM57 305h1v22h-1zM65 319h1v9h-1zM73 319h1v17h-1zM77 335h1v31h-1zM89 349h1v12h-1zM93 361h1v4h-1zM97 363h1v5h-1zM101 367h1v73h-1zM109 435h1v13h-1zM125 447h1v5h-1zM133 452h1v14h-1zM141 461h1v14h-1zM153 469h1v5h-1zM161 385h1v9h-1zM181 361h1v5h-1zM193 355h1v5h-1zM217 307h1v43h-1zM221 349h1v3h-1zM225 353h1v13h-1zM233 359h1v9h-1zM241 365h1v7h-1zM249 343h1v11h-1zM257 339h1v71h-1zM265 402h1v3h-1zM269 407h1v3h-1zM297 286h1v1h-1zM305 281h1v29h-1zM309 310h1v4h-1zM313 314h1v14h-1zM337 262h1v2h-1zM341 263h1v13h-1zM361 257h1v4h-1zM365 261h1v22h-1zM369 283h1v3h-1zM393 220h1v2h-1zM397 223h1v9h-1zM401 233h1v3h-1zM405 234h1v6h-1zM409 238h1v7h-1zM413 245h1v23h-1zM421 267h1v3h-1zM429 227h1v3h-1zM433 229h1v3h-1zM445 235h1v15h-1zM453 159h1v13h-1zM457 173h1v5h-1zM473 175h1v19h-1zM481 185h1v23h-1zM485 209h1v14h-1zM505 204h1v7h-1zM509 209h1v10h-1zM513 220h1v30h-1zM533 179h1v9h-1zM541 176h1v2h-1zM545 179h1v7h-1zM549 187h1v30h-1zM553 219h1v33h-1zM561 241h1v16h-1zM573 249h1v22h-1zM577 272h1v18h-1zM581 291h1v5h-1zM585 294h1v8h-1zM597 278h1v7h-1zM605 285h1v14h-1zM613 295h1v3h-1zM621 280h1v19h-1zM629 239h1v7h-1zM653 199h1v3h-1zM657 201h1v3h-1zM665 193h1v2h-1zM673 183h1v2h-1zM677 185h1v37h-1zM693 207h1v10h-1zM701 207h1v15h-1zM709 215h1v1h-1zM717 179h1v2h-1zM729 139h1v15h-1zM733 157h1v14h-1zM737 171h1v16h-1zM745 183h1v23h-1zM749 208h1v23h-1zM753 233h1v13h-1zM761 232h1v9h-1zM777 210h1v39h-1zM785 246h1v20h-1z"/>
<g clip-path="url(#cm)">
<path fill="#ff00ff" d="M538 203h2v1h-2zM566 203h1v1h-1zM741 203h6v1h-6zM771 203h4v1h-4zM449 247h1v1h-1zM623 247h8v1h-8zM687 247h3v1h-3zM35 268h11v1h-11zM411 268h4v1h-4zM48 270h3v1h-3zM406 270h2v1h-2zM112 328h1v1h-1zM347 328h2v1h-2zM138 366h1v1h-1zM271 366h3v1h-3zM151 386h1v1h-1zM239 386h2v1h-2zM66 278h1v1h-1zM395 278h1v1h-1zM82 294h1v1h-1zM385 294h1v1h-1zM138 367h1v1h-1zM267 367h4v1h-4zM163 396h2v1h-2zM224 396h2v1h-2zM15 265h8v1h-8zM422 265h2v1h-2zM59 275h2v1h-2zM398 275h1v1h-1zM134 359h1v1h-1zM285 359h1v1h-1zM31 267h4v1h-4zM415 267h4v1h-4zM503 216h15v1h-15zM580 216h1v1h-1zM728 216h1v1h-1zM83 295h1v1h-1zM384 295h1v1h-1zM445 250h1v1h-1zM638 250h2v1h-2zM679 250h3v1h-3zM499 217h4v1h-4zM581 217h1v1h-1zM727 217h1v1h-1zM136 363h1v1h-1zM278 363h2v1h-2zM122 343h1v1h-1zM319 343h3v1h-3zM73 284h1v1h-1zM390 284h1v1h-1zM131 355h1v1h-1zM290 355h2v1h-2zM528 210h2v1h-2zM574 210h1v1h-1zM734 210h1v1h-1zM90 302h1v1h-1zM379 302h1v1h-1zM531 208h2v1h-2zM571 208h2v1h-2zM736 208h1v1h-1zM46 269h2v1h-2zM408 269h3v1h-3zM137 365h1v1h-1zM274 365h2v1h-2zM540 202h3v1h-3zM559 202h7v1h-7zM747 202h24v1h-24zM89 301h1v1h-1zM379 301h1v1h-1zM533 207h1v1h-1zM570 207h1v1h-1zM737 207h1v1h-1zM783 207h3v1h-3zM174 403h2v1h-2zM208 403h3v1h-3zM159 393h2v1h-2zM230 393h1v1h-1zM110 325h1v1h-1zM351 325h2v1h-2zM524 212h2v1h-2zM576 212h1v1h-1zM732 212h1v1h-1zM119 338h1v1h-1zM334 338h1v1h-1zM447 248h2v1h-2zM631 248h4v1h-4zM684 248h3v1h-3zM462 237h1v1h-1zM607 237h2v1h-2zM706 237h1v1h-1zM96 308h1v1h-1zM374 308h1v1h-1zM482 224h2v1h-2zM590 224h1v1h-1zM720 224h1v1h-1zM537 204h1v1h-1zM567 204h1v1h-1zM740 204h1v1h-1zM775 204h3v1h-3zM124 346h1v1h-1zM307 346h4v1h-4zM458 240h1v1h-1zM611 240h2v1h-2zM700 240h2v1h-2zM520 214h2v1h-2zM578 214h1v1h-1zM730 214h1v1h-1zM79 291h1v1h-1zM386 291h1v1h-1zM108 322h1v1h-1zM355 322h2v1h-2zM451 245h2v1h-2zM619 245h2v1h-2zM692 245h2v1h-2zM75 286h1v1h-1zM389 286h1v1h-1zM133 358h1v1h-1zM286 358h1v1h-1zM123 344h1v1h-1zM315 344h4v1h-4zM144 376h1v1h-1zM251 376h2v1h-2zM547 200h4v1h-4zM518 215h2v1h-2zM579 215h1v1h-1zM729 215h1v1h-1zM432 259h2v1h-2zM106 319h1v1h-1zM359 319h1v1h-1zM145 377h1v1h-1zM250 377h1v1h-1zM478 226h2v1h-2zM593 226h1v1h-1zM718 226h1v1h-1zM97 309h1v1h-1zM373 309h1v1h-1zM139 369h1v1h-1zM262 369h2v1h-2zM166 398h1v1h-1zM220 398h2v1h-2zM443 251h2v1h-2zM640 251h3v1h-3zM675 251h4v1h-4zM5 263h6v1h-6zM426 263h1v1h-1zM143 374h1v1h-1zM254 374h2v1h-2zM86 298h1v1h-1zM382 298h1v1h-1zM184 407h3v1h-3zM199 407h3v1h-3zM492 219h3v1h-3zM583 219h2v1h-2zM726 219h1v1h-1zM438 255h1v1h-1zM655 255h4v1h-4zM666 255h2v1h-2zM104 317h1v1h-1zM361 317h1v1h-1zM51 271h3v1h-3zM404 271h2v1h-2zM101 313h1v1h-1zM366 313h2v1h-2zM176 404h3v1h-3zM206 404h2v1h-2zM128 352h1v1h-1zM295 352h2v1h-2zM459 239h2v1h-2zM610 239h1v1h-1zM702 239h2v1h-2zM543 201h4v1h-4zM551 201h8v1h-8zM126 349h1v1h-1zM299 349h2v1h-2zM486 222h2v1h-2zM587 222h2v1h-2zM722 222h1v1h-1zM132 357h1v1h-1zM287 357h2v1h-2zM11 264h4v1h-4zM424 264h2v1h-2zM439 254h2v1h-2zM648 254h7v1h-7zM668 254h2v1h-2zM455 242h2v1h-2zM614 242h2v1h-2zM697 242h1v1h-1zM170 401h2v1h-2zM214 401h2v1h-2zM172 402h2v1h-2zM211 402h3v1h-3zM437 256h1v1h-1zM659 256h7v1h-7zM484 223h2v1h-2zM589 223h1v1h-1zM721 223h1v1h-1zM120 340h1v1h-1zM327 340h4v1h-4zM148 382h1v1h-1zM244 382h1v1h-1zM429 261h1v1h-1zM474 228h2v1h-2zM595 228h2v1h-2zM716 228h1v1h-1zM146 379h1v1h-1zM247 379h2v1h-2zM23 266h8v1h-8zM419 266h3v1h-3zM135 362h1v1h-1zM280 362h2v1h-2zM453 244h1v1h-1zM618 244h1v1h-1zM694 244h1v1h-1zM169 400h1v1h-1zM216 400h2v1h-2zM116 335h1v1h-1zM338 335h1v1h-1zM155 390h2v1h-2zM234 390h1v1h-1zM69 280h1v1h-1zM393 280h1v1h-1zM466 234h1v1h-1zM603 234h2v1h-2zM710 234h1v1h-1zM446 249h1v1h-1zM635 249h3v1h-3zM682 249h2v1h-2zM139 368h1v1h-1zM264 368h3v1h-3zM165 397h1v1h-1zM222 397h2v1h-2zM81 293h1v1h-1zM385 293h1v1h-1zM442 252h1v1h-1zM643 252h3v1h-3zM672 252h3v1h-3zM124 345h1v1h-1zM311 345h4v1h-4zM463 236h2v1h-2zM606 236h1v1h-1zM707 236h2v1h-2zM187 408h4v1h-4zM195 408h4v1h-4zM130 354h1v1h-1zM292 354h2v1h-2zM122 342h1v1h-1zM322 342h2v1h-2zM467 233h2v1h-2zM602 233h1v1h-1zM711 233h1v1h-1zM78 290h1v1h-1zM387 290h1v1h-1zM179 405h3v1h-3zM204 405h2v1h-2zM147 380h1v1h-1zM246 380h1v1h-1zM471 230h2v1h-2zM598 230h1v1h-1zM714 230h1v1h-1zM182 406h2v1h-2zM202 406h2v1h-2zM136 364h1v1h-1zM276 364h2v1h-2zM450 246h1v1h-1zM621 246h2v1h-2zM690 246h2v1h-2zM114 332h1v1h-1zM342 332h1v1h-1zM162 395h1v1h-1zM226 395h2v1h-2zM103 315h1v1h-1zM363 315h2v1h-2zM142 373h1v1h-1zM256 373h2v1h-2zM430 260h2v1h-2zM476 227h2v1h-2zM594 227h1v1h-1zM717 227h1v1h-1zM106 320h1v1h-1zM358 320h1v1h-1zM146 378h1v1h-1zM249 378h1v1h-1zM85 297h1v1h-1zM383 297h1v1h-1zM112 329h1v1h-1zM346 329h1v1h-1zM152 387h1v1h-1zM238 387h1v1h-1zM457 241h1v1h-1zM613 241h1v1h-1zM698 241h2v1h-2zM100 312h1v1h-1zM368 312h2v1h-2zM140 370h1v1h-1zM261 370h1v1h-1zM167 399h2v1h-2zM218 399h2v1h-2zM435 257h2v1h-2zM107 321h1v1h-1zM357 321h1v1h-1zM70 281h1v1h-1zM392 281h1v1h-1zM143 375h1v1h-1zM253 375h1v1h-1zM110 326h1v1h-1zM350 326h1v1h-1zM118 337h1v1h-1zM335 337h2v1h-2zM490 220h2v1h-2zM585 220h1v1h-1zM725 220h1v1h-1zM150 384h1v1h-1zM242 384h1v1h-1zM77 289h1v1h-1zM387 289h1v1h-1zM191 409h4v1h-4zM61 276h2v1h-2zM397 276h1v1h-1zM121 341h1v1h-1zM324 341h3v1h-3zM125 347h1v1h-1zM303 347h4v1h-4zM470 231h1v1h-1zM599 231h2v1h-2zM713 231h1v1h-1zM87 299h1v1h-1zM381 299h1v1h-1zM535 205h2v1h-2zM568 205h1v1h-1zM739 205h1v1h-1zM778 205h2v1h-2zM427 262h2v1h-2zM473 229h1v1h-1zM597 229h1v1h-1zM715 229h1v1h-1zM454 243h1v1h-1zM616 243h2v1h-2zM695 243h2v1h-2zM102 314h1v1h-1zM365 314h1v1h-1zM108 323h1v1h-1zM354 323h1v1h-1zM56 273h2v1h-2zM401 273h1v1h-1zM469 232h1v1h-1zM601 232h1v1h-1zM712 232h1v1h-1zM441 253h1v1h-1zM646 253h2v1h-2zM670 253h2v1h-2zM119 339h1v1h-1zM331 339h3v1h-3zM161 394h1v1h-1zM228 394h2v1h-2zM526 211h2v1h-2zM575 211h1v1h-1zM733 211h1v1h-1zM461 238h1v1h-1zM609 238h1v1h-1zM704 238h2v1h-2zM534 206h1v1h-1zM569 206h1v1h-1zM738 206h1v1h-1zM780 206h3v1h-3zM495 218h4v1h-4zM582 218h1v1h-1zM727 218h1v1h-1zM84 296h1v1h-1zM383 296h1v1h-1zM74 285h1v1h-1zM389 285h1v1h-1zM93 305h1v1h-1zM376 305h1v1h-1zM91 303h1v1h-1zM378 303h1v1h-1zM54 272h2v1h-2zM402 272h2v1h-2zM76 288h1v1h-1zM388 288h1v1h-1zM480 225h2v1h-2zM591 225h2v1h-2zM719 225h1v1h-1zM127 350h1v1h-1zM298 350h1v1h-1zM63 277h3v1h-3zM396 277h1v1h-1zM117 336h1v1h-1zM337 336h1v1h-1zM128 351h1v1h-1zM297 351h1v1h-1zM149 383h1v1h-1zM243 383h1v1h-1zM58 274h1v1h-1zM399 274h2v1h-2zM98 310h1v1h-1zM371 310h2v1h-2zM465 235h1v1h-1zM605 235h1v1h-1zM709 235h1v1h-1zM80 292h1v1h-1zM386 292h1v1h-1zM115 333h1v1h-1zM341 333h1v1h-1zM157 391h1v1h-1zM233 391h1v1h-1zM105 318h1v1h-1zM360 318h1v1h-1zM153 388h1v1h-1zM237 388h1v1h-1zM522 213h2v1h-2zM577 213h1v1h-1zM731 213h1v1h-1zM109 324h1v1h-1zM353 324h1v1h-1zM134 360h1v1h-1zM283 360h2v1h-2zM131 356h1v1h-1zM289 356h1v1h-1zM530 209h1v1h-1zM573 209h1v1h-1zM735 209h1v1h-1zM140 371h1v1h-1zM259 371h2v1h-2zM488 221h2v1h-2zM586 221h1v1h-1zM723 221h2v1h-2zM72 283h1v1h-1zM391 283h1v1h-1zM126 348h1v1h-1zM301 348h2v1h-2zM148 381h1v1h-1zM245 381h1v1h-1zM95 307h1v1h-1zM375 307h1v1h-1zM71 282h1v1h-1zM391 282h1v1h-1zM111 327h1v1h-1zM349 327h1v1h-1zM116 334h1v1h-1zM339 334h2v1h-2zM158 392h1v1h-1zM231 392h2v1h-2zM67 279h2v1h-2zM394 279h1v1h-1zM154 389h1v1h-1zM235 389h2v1h-2zM151 385h1v1h-1zM241 385h1v1h-1zM92 304h1v1h-1zM377 304h1v1h-1zM129 353h1v1h-1zM294 353h1v1h-1zM114 331h1v1h-1zM343 331h2v1h-2zM141 372h1v1h-1zM258 372h1v1h-1zM99 311h1v1h-1zM370 311h1v1h-1zM103 316h1v1h-1zM362 316h1v1h-1zM113 330h1v1h-1zM345 330h1v1h-1zM75 287h1v1h-1zM388 287h1v1h-1zM88 300h1v1h-1zM380 300h1v1h-1zM94 306h1v1h-1zM375 306h1v1h-1zM434 258h1v1h-1zM135 361h1v1h-1zM282 361h1v1h-1z"/>
<path fill="#00ffff" d="M611 284h1v1h-1zM511 206h1v2h-1zM395 251h1v1h-1zM701 205h1v1h-1zM135 431h1v2h-1zM776 216h1v2h-1zM658 242h1v2h-1zM155 455h1v2h-1zM596 268h1v1h-1zM178 420h1v2h-1zM286 371h1v2h-1zM158 451h1v2h-1zM470 201h1v1h-1zM534 204h1v1h-1zM190 392h1v3h-1zM503 198h1v1h-1zM690 204h1v1h-1zM100 348h1v3h-1zM118 395h1v2h-1zM388 257h1v1h-1zM11 270h1v1h-1zM526 209h1v1h-1zM682 209h1v1h-1zM226 344h1v1h-1zM334 295h1v1h-1zM452 231h1v2h-1zM589 255h1v3h-1zM365 273h1v1h-1zM715 206h1v1h-1zM747 186h1v1h-1zM194 381h1v3h-1zM674 214h1v1h-1zM468 203h1v2h-1zM538 201h1v1h-1zM206 356h1v1h-1zM586 249h1v2h-1zM488 191h1v1h-1zM132 424h1v2h-1zM281 377h1v1h-1zM622 289h1v1h-1zM571 216h1v1h-1zM93 335h1v1h-1zM383 262h1v2h-1zM411 245h1v1h-1zM340 292h1v1h-1zM654 250h1v2h-1zM329 301h1v1h-1zM114 384h1v3h-1zM177 422h1v2h-1zM59 297h1v2h-1zM544 198h1v1h-1zM15 272h1v1h-1zM318 318h1v2h-1zM189 395h1v3h-1zM572 217h1v2h-1zM78 319h1v1h-1zM166 441h1v1h-1zM143 447h1v2h-1zM448 238h1v2h-1zM418 244h1v1h-1zM464 210h1v2h-1zM202 363h1v2h-1zM63 302h1v2h-1zM149 455h1v1h-1zM610 283h1v1h-1zM229 344h1v1h-1zM121 401h1v3h-1zM641 270h1v1h-1zM739 186h1v1h-1zM750 186h1v1h-1zM289 367h1v1h-1zM161 447h1v1h-1zM110 373h1v3h-1zM779 221h1v2h-1zM150 456h1v1h-1zM499 195h1v1h-1zM653 252h1v2h-1zM731 191h1v1h-1zM445 243h1v1h-1zM173 430h1v1h-1zM772 209h1v2h-1zM185 404h1v3h-1zM780 223h1v2h-1zM85 326h1v1h-1zM37 286h1v1h-1zM634 276h1v1h-1zM728 194h1v2h-1zM783 227h1v2h-1zM392 254h1v1h-1zM773 211h1v1h-1zM352 288h1v1h-1zM70 310h1v1h-1zM99 345h1v3h-1zM252 350h1v1h-1zM244 346h1v1h-1zM522 211h1v1h-1zM574 221h1v2h-1zM754 188h1v1h-1zM429 239h1v1h-1zM92 334h1v1h-1zM769 204h1v1h-1zM649 260h1v1h-1zM277 379h1v1h-1zM269 375h1v1h-1zM169 437h1v1h-1zM570 214h1v2h-1zM336 294h1v1h-1zM193 384h1v3h-1zM371 270h1v1h-1zM402 248h1v1h-1zM270 376h1v1h-1zM305 343h1v1h-1zM540 200h1v1h-1zM581 237h1v3h-1zM662 234h1v2h-1zM103 356h1v3h-1zM380 266h1v1h-1zM510 205h1v1h-1zM197 373h1v3h-1zM722 203h1v2h-1zM36 285h1v1h-1zM360 278h1v1h-1zM552 201h1v1h-1zM456 224h1v2h-1zM7 267h1v1h-1zM273 377h1v1h-1zM645 267h1v1h-1zM355 284h1v2h-1zM775 214h1v2h-1zM735 188h1v1h-1zM120 399h1v2h-1zM309 335h1v2h-1zM324 306h1v2h-1zM768 203h1v1h-1zM301 350h1v1h-1zM588 253h1v2h-1zM517 212h1v1h-1zM433 240h1v1h-1zM181 413h1v3h-1zM578 230h1v2h-1zM251 349h1v1h-1zM134 429h1v2h-1zM259 361h1v2h-1zM548 199h1v1h-1zM414 245h1v1h-1zM599 271h1v2h-1zM262 367h1v1h-1zM563 206h1v1h-1zM131 421h1v3h-1zM348 290h1v1h-1zM201 365h1v2h-1zM221 344h1v1h-1zM232 344h1v1h-1zM116 389h1v3h-1zM573 219h1v2h-1zM55 293h1v1h-1zM436 241h1v1h-1zM742 186h1v1h-1zM213 349h1v1h-1zM460 216h1v2h-1zM363 275h1v1h-1zM145 451h1v2h-1zM494 191h1v1h-1zM585 246h1v3h-1zM672 216h1v2h-1zM472 200h1v1h-1zM711 207h1v1h-1zM692 203h1v1h-1zM524 210h1v1h-1zM657 244h1v2h-1zM40 286h1v1h-1zM80 322h1v1h-1zM217 346h1v1h-1zM247 347h1v1h-1zM684 208h1v1h-1zM184 407h1v2h-1zM157 453h1v1h-1zM285 373h1v1h-1zM421 243h1v1h-1zM629 281h1v1h-1zM160 448h1v2h-1zM484 192h1v1h-1zM398 250h1v1h-1zM495 192h1v1h-1zM506 201h1v1h-1zM62 301h1v1h-1zM476 197h1v1h-1zM559 204h1v1h-1zM580 235h1v2h-1zM113 381h1v3h-1zM390 255h1v1h-1zM172 431h1v2h-1zM81 323h1v1h-1zM102 354h1v2h-1zM620 290h1v1h-1zM718 206h1v1h-1zM520 212h1v1h-1zM467 205h1v2h-1zM43 287h1v1h-1zM84 325h1v1h-1zM142 445h1v2h-1zM292 363h1v1h-1zM295 359h1v1h-1zM529 208h1v1h-1zM261 365h1v2h-1zM668 222h1v2h-1zM513 209h1v1h-1zM319 316h1v2h-1zM224 344h1v1h-1zM761 194h1v1h-1zM28 280h1v1h-1zM782 226h1v1h-1zM491 190h1v1h-1zM374 270h1v1h-1zM331 298h1v2h-1zM109 370h1v3h-1zM205 357h1v2h-1zM409 246h1v1h-1zM192 387h1v3h-1zM117 392h1v3h-1zM648 261h1v2h-1zM767 201h1v2h-1zM29 281h1v1h-1zM587 251h1v2h-1zM440 242h1v1h-1zM577 227h1v3h-1zM636 275h1v1h-1zM196 376h1v3h-1zM258 359h1v2h-1zM91 332h1v2h-1zM54 292h1v1h-1zM455 226h1v2h-1zM664 230h1v2h-1zM24 278h1v1h-1zM676 213h1v1h-1zM95 337h1v2h-1zM416 244h1v1h-1zM144 449h1v2h-1zM688 205h1v1h-1zM699 205h1v1h-1zM425 240h1v1h-1zM47 288h1v1h-1zM680 210h1v1h-1zM308 337h1v2h-1zM288 368h1v2h-1zM50 290h1v1h-1zM394 252h1v1h-1zM606 279h1v1h-1zM624 287h1v1h-1zM725 199h1v1h-1zM451 233h1v2h-1zM101 351h1v3h-1zM279 378h1v1h-1zM119 397h1v2h-1zM367 271h1v1h-1zM760 193h1v1h-1zM208 354h1v1h-1zM781 225h1v1h-1zM151 457h1v1h-1zM404 247h1v1h-1zM51 290h1v1h-1zM778 219h1v2h-1zM598 270h1v1h-1zM459 218h1v2h-1zM304 344h1v2h-1zM176 424h1v2h-1zM621 290h1v1h-1zM771 207h1v2h-1zM188 398h1v2h-1zM382 264h1v1h-1zM774 212h1v2h-1zM385 260h1v1h-1zM343 291h1v1h-1zM254 352h1v2h-1zM328 302h1v1h-1zM442 242h1v1h-1zM98 342h1v3h-1zM605 278h1v1h-1zM505 200h1v1h-1zM616 287h1v1h-1zM227 344h1v1h-1zM463 212h1v1h-1zM443 243h1v1h-1zM466 207h1v2h-1zM377 270h1v1h-1zM698 204h1v1h-1zM291 364h1v2h-1zM163 444h1v2h-1zM94 336h1v1h-1zM617 288h1v1h-1zM323 308h1v2h-1zM652 254h1v2h-1zM667 224h1v2h-1zM640 271h1v1h-1zM350 289h1v1h-1zM16 273h1v1h-1zM447 240h1v1h-1zM141 443h1v2h-1zM219 345h1v1h-1zM730 192h1v1h-1zM65 305h1v1h-1zM191 390h1v2h-1zM283 375h1v1h-1zM200 367h1v2h-1zM627 283h1v2h-1zM702 206h1v1h-1zM298 354h1v2h-1zM427 239h1v1h-1zM215 347h1v1h-1zM482 193h1v1h-1zM597 269h1v1h-1zM671 218h1v1h-1zM400 249h1v1h-1zM454 228h1v2h-1zM474 198h1v1h-1zM20 275h1v1h-1zM663 232h1v2h-1zM714 207h1v1h-1zM745 185h1v1h-1zM238 345h1v1h-1zM183 409h1v2h-1zM257 357h1v2h-1zM686 206h1v1h-1zM423 241h1v1h-1zM369 270h1v1h-1zM260 363h1v2h-1zM478 195h1v1h-1zM72 312h1v1h-1zM770 205h1v2h-1zM527 209h1v1h-1zM133 426h1v3h-1zM87 328h1v1h-1zM253 351h1v1h-1zM643 268h1v1h-1zM405 247h1v1h-1zM294 360h1v2h-1zM108 368h1v2h-1zM362 276h1v1h-1zM543 199h1v1h-1zM755 189h1v1h-1zM97 340h1v2h-1zM339 292h1v1h-1zM721 205h1v1h-1zM523 211h1v1h-1zM724 200h1v2h-1zM450 235h1v2h-1zM79 320h1v2h-1zM126 412h1v2h-1zM748 186h1v1h-1zM182 411h1v2h-1zM204 359h1v2h-1zM130 419h1v2h-1zM147 454h1v1h-1zM326 304h1v1h-1zM354 286h1v1h-1zM357 282h1v1h-1zM706 207h1v1h-1zM346 291h1v1h-1zM431 240h1v1h-1zM140 441h1v2h-1zM241 345h1v1h-1zM412 245h1v1h-1zM579 232h1v3h-1zM112 378h1v3h-1zM751 187h1v1h-1zM175 426h1v2h-1zM187 400h1v2h-1zM274 378h1v1h-1zM709 208h1v1h-1zM740 186h1v1h-1zM86 327h1v1h-1zM678 211h1v1h-1zM763 196h1v2h-1zM732 191h1v1h-1zM784 229h1v1h-1zM612 284h1v1h-1zM396 251h1v1h-1zM322 310h1v2h-1zM71 311h1v1h-1zM30 282h1v1h-1zM462 213h1v2h-1zM256 355h1v2h-1zM419 243h1v1h-1zM264 369h1v1h-1zM736 188h1v1h-1zM785 230h1v1h-1zM651 256h1v2h-1zM171 433h1v2h-1zM12 270h1v1h-1zM716 206h1v1h-1zM601 274h1v1h-1zM56 294h1v1h-1zM210 352h1v1h-1zM489 191h1v1h-1zM531 206h1v1h-1zM154 457h1v1h-1zM199 369h1v2h-1zM146 453h1v1h-1zM222 344h1v1h-1zM57 295h1v1h-1zM341 292h1v1h-1zM430 239h1v1h-1zM458 220h1v2h-1zM553 202h1v1h-1zM407 246h1v1h-1zM583 242h1v2h-1zM545 198h1v1h-1zM623 288h1v1h-1zM670 219h1v2h-1zM647 263h1v2h-1zM8 268h1v1h-1zM82 324h1v1h-1zM248 347h1v1h-1zM139 439h1v2h-1zM638 273h1v1h-1zM608 281h1v1h-1zM515 211h1v1h-1zM230 344h1v1h-1zM317 320h1v2h-1zM631 279h1v1h-1zM762 195h1v1h-1zM600 273h1v1h-1zM500 195h1v1h-1zM263 368h1v1h-1zM564 207h1v1h-1zM666 226h1v2h-1zM556 203h1v1h-1zM446 241h1v2h-1zM38 286h1v1h-1zM107 366h1v2h-1zM626 285h1v1h-1zM245 346h1v1h-1zM518 212h1v1h-1zM777 218h1v1h-1zM557 203h1v1h-1zM33 283h1v1h-1zM313 328h1v1h-1zM549 199h1v1h-1zM129 417h1v2h-1zM607 280h1v1h-1zM507 202h1v1h-1zM560 205h1v1h-1zM480 194h1v1h-1zM34 284h1v1h-1zM207 355h1v1h-1zM372 270h1v1h-1zM125 410h1v2h-1zM582 240h1v2h-1zM403 248h1v1h-1zM271 376h1v1h-1zM282 376h1v1h-1zM541 200h1v1h-1zM469 202h1v1h-1zM122 404h1v2h-1zM533 205h1v1h-1zM26 279h1v1h-1zM712 207h1v1h-1zM693 203h1v1h-1zM593 264h1v2h-1zM514 210h1v1h-1zM525 210h1v1h-1zM330 300h1v1h-1zM236 345h1v1h-1zM333 296h1v1h-1zM481 194h1v1h-1zM364 274h1v1h-1zM473 199h1v1h-1zM537 202h1v1h-1zM136 433h1v2h-1zM661 236h1v2h-1zM696 204h1v1h-1zM52 291h1v1h-1zM44 287h1v1h-1zM379 267h1v2h-1zM410 246h1v1h-1zM198 371h1v2h-1zM22 277h1v1h-1zM465 209h1v1h-1zM642 269h1v1h-1zM434 240h1v1h-1zM290 366h1v1h-1zM162 446h1v1h-1zM719 205h1v1h-1zM293 362h1v1h-1zM165 442h1v1h-1zM106 364h1v2h-1zM255 354h1v1h-1zM457 222h1v2h-1zM492 190h1v1h-1zM174 428h1v2h-1zM96 339h1v1h-1zM186 402h1v2h-1zM349 290h1v1h-1zM233 344h1v1h-1zM89 330h1v1h-1zM297 356h1v1h-1zM437 241h1v1h-1zM48 289h1v1h-1zM300 351h1v2h-1zM128 415h1v2h-1zM738 187h1v1h-1zM727 196h1v1h-1zM321 312h1v2h-1zM618 289h1v1h-1zM387 258h1v1h-1zM214 348h1v1h-1zM41 286h1v1h-1zM25 278h1v1h-1zM496 192h1v1h-1zM673 215h1v1h-1zM278 378h1v1h-1zM453 230h1v1h-1zM650 258h1v2h-1zM665 228h1v2h-1zM66 306h1v1h-1zM337 293h1v1h-1zM689 205h1v1h-1zM521 212h1v1h-1zM426 240h1v1h-1zM592 262h1v2h-1zM477 196h1v1h-1zM67 307h1v1h-1zM18 274h1v1h-1zM225 344h1v1h-1zM703 206h1v1h-1zM168 438h1v1h-1zM21 276h1v1h-1zM375 270h1v1h-1zM765 199h1v1h-1zM312 329h1v2h-1zM487 191h1v1h-1zM359 279h1v2h-1zM704 207h1v1h-1zM344 291h1v1h-1zM73 313h1v1h-1zM441 242h1v1h-1zM239 345h1v1h-1zM325 305h1v1h-1zM356 283h1v1h-1zM153 458h1v1h-1zM74 314h1v1h-1zM14 272h1v1h-1zM584 244h1v2h-1zM707 208h1v1h-1zM444 243h1v1h-1zM316 322h1v2h-1zM644 268h1v1h-1zM124 408h1v2h-1zM633 277h1v1h-1zM417 244h1v1h-1zM734 189h1v1h-1zM127 414h1v1h-1zM180 416h1v2h-1zM700 205h1v1h-1zM681 210h1v1h-1zM637 274h1v1h-1zM757 190h1v1h-1zM138 437h1v2h-1zM685 207h1v1h-1zM368 271h1v1h-1zM399 249h1v1h-1zM677 212h1v1h-1zM391 254h1v1h-1zM656 246h1v2h-1zM764 198h1v1h-1zM152 457h1v1h-1zM307 339h1v2h-1zM613 285h1v1h-1zM243 346h1v1h-1zM296 357h1v2h-1zM691 204h1v1h-1zM88 329h1v1h-1zM428 239h1v1h-1zM502 197h1v1h-1zM156 454h1v1h-1zM265 370h1v1h-1zM483 193h1v1h-1zM566 208h1v2h-1zM614 286h1v1h-1zM320 314h1v2h-1zM625 286h1v1h-1zM539 201h1v1h-1zM723 202h1v1h-1zM746 185h1v1h-1zM406 247h1v1h-1zM669 221h1v1h-1zM266 371h1v1h-1zM567 210h1v1h-1zM228 344h1v1h-1zM303 346h1v2h-1zM749 186h1v1h-1zM35 285h1v1h-1zM123 406h1v2h-1zM490 191h1v1h-1zM240 345h1v1h-1zM532 206h1v1h-1zM17 273h1v1h-1zM591 260h1v2h-1zM660 238h1v2h-1zM137 435h1v2h-1zM594 266h1v1h-1zM212 350h1v1h-1zM595 267h1v1h-1zM378 269h1v1h-1zM216 347h1v1h-1zM628 282h1v1h-1zM10 269h1v1h-1zM726 197h1v2h-1zM401 249h1v1h-1zM280 377h1v1h-1zM13 271h1v1h-1zM220 344h1v1h-1zM335 294h1v1h-1zM710 208h1v1h-1zM687 206h1v1h-1zM315 324h1v2h-1zM209 353h1v1h-1zM424 241h1v1h-1zM435 241h1v1h-1zM105 361h1v3h-1zM370 270h1v1h-1zM679 211h1v1h-1zM602 275h1v1h-1zM741 186h1v1h-1zM479 195h1v1h-1zM284 374h1v1h-1zM179 418h1v2h-1zM565 207h1v1h-1zM5 266h1v1h-1zM76 317h1v1h-1zM471 200h1v1h-1zM535 203h1v1h-1zM753 187h1v1h-1zM58 296h1v1h-1zM756 189h1v1h-1zM6 267h1v1h-1zM77 318h1v1h-1zM475 197h1v1h-1zM386 259h1v1h-1zM558 204h1v1h-1zM332 297h1v1h-1zM717 206h1v1h-1zM83 325h1v1h-1zM311 331h1v2h-1zM536 203h1v1h-1zM551 201h1v1h-1zM148 454h1v1h-1zM528 208h1v1h-1zM609 282h1v1h-1zM509 204h1v1h-1zM561 205h1v1h-1zM272 377h1v1h-1zM432 240h1v1h-1zM590 258h1v2h-1zM381 265h1v1h-1zM242 345h1v1h-1zM413 245h1v1h-1zM498 194h1v1h-1zM327 303h1v1h-1zM752 187h1v1h-1zM562 206h1v1h-1zM554 202h1v1h-1zM501 196h1v1h-1zM351 288h1v1h-1zM68 308h1v1h-1zM9 268h1v1h-1zM164 443h1v1h-1zM203 361h1v2h-1zM231 344h1v1h-1zM275 378h1v1h-1zM576 225h1v2h-1zM555 203h1v1h-1zM547 199h1v1h-1zM69 309h1v1h-1zM287 370h1v1h-1zM159 450h1v1h-1zM276 379h1v1h-1zM516 211h1v1h-1zM299 353h1v1h-1zM39 286h1v1h-1zM250 348h1v1h-1zM31 282h1v1h-1zM389 256h1v1h-1zM75 315h1v2h-1zM420 243h1v1h-1zM366 272h1v1h-1zM683 208h1v1h-1zM675 213h1v1h-1zM729 193h1v1h-1zM268 374h1v1h-1zM550 200h1v1h-1zM569 213h1v1h-1zM393 253h1v1h-1zM32 283h1v1h-1zM508 203h1v1h-1zM115 387h1v2h-1zM519 212h1v1h-1zM632 278h1v1h-1zM655 248h1v2h-1zM397 250h1v1h-1zM306 341h1v2h-1zM485 192h1v1h-1zM223 344h1v1h-1zM246 346h1v1h-1zM27 280h1v1h-1zM167 439h1v2h-1zM342 292h1v1h-1zM170 435h1v2h-1zM373 270h1v1h-1zM61 300h1v1h-1zM408 246h1v1h-1zM546 198h1v1h-1zM497 193h1v1h-1zM111 376h1v2h-1zM235 345h1v1h-1zM694 203h1v1h-1zM249 347h1v1h-1zM314 326h1v2h-1zM486 192h1v1h-1zM358 281h1v1h-1zM695 204h1v1h-1zM347 290h1v1h-1zM302 348h1v2h-1zM646 265h1v2h-1zM449 237h1v1h-1zM575 223h1v2h-1zM635 275h1v1h-1zM415 244h1v1h-1zM615 287h1v1h-1zM267 372h1v2h-1zM353 287h1v1h-1zM568 211h1v2h-1zM659 240h1v2h-1zM733 190h1v1h-1zM639 272h1v1h-1zM90 331h1v1h-1zM310 333h1v2h-1zM60 299h1v1h-1zM23 277h1v1h-1zM737 187h1v1h-1zM104 359h1v2h-1zM195 379h1v2h-1zM218 345h1v1h-1zM743 185h1v1h-1zM619 289h1v1h-1zM234 344h1v1h-1zM384 261h1v1h-1zM211 351h1v1h-1zM438 241h1v1h-1zM49 289h1v1h-1zM361 277h1v1h-1zM461 215h1v1h-1zM512 208h1v1h-1zM713 207h1v1h-1zM19 275h1v1h-1zM439 242h1v1h-1zM42 286h1v1h-1zM237 345h1v1h-1zM744 185h1v1h-1zM766 200h1v1h-1zM530 207h1v1h-1zM338 293h1v1h-1zM697 204h1v1h-1zM53 291h1v1h-1zM45 287h1v1h-1zM542 199h1v1h-1zM603 276h1v1h-1zM720 205h1v1h-1zM46 288h1v1h-1zM493 190h1v1h-1zM376 270h1v1h-1zM604 277h1v1h-1zM504 199h1v1h-1zM705 207h1v1h-1zM345 291h1v1h-1zM758 191h1v1h-1zM422 242h1v1h-1zM630 280h1v1h-1zM708 208h1v1h-1zM759 192h1v1h-1zM64 304h1v1h-1z"/>
<path fill="#ff0000" d="M37 296h1v2h-1zM724 176h1v4h-1zM167 410h1v4h-1zM286 359h1v5h-1zM415 246h1v2h-1zM462 178h1v3h-1zM233 356h1v2h-1zM11 278h1v2h-1zM206 337h1v2h-1zM495 212h1v2h-1zM650 235h1v3h-1zM346 269h1v1h-1zM277 397h1v2h-1zM269 392h1v3h-1zM290 337h1v6h-1zM622 289h1v3h-1zM270 395h1v3h-1zM772 232h1v2h-1zM659 212h1v3h-1zM202 345h1v2h-1zM700 213h1v1h-1zM99 366h1v4h-1zM388 241h1v3h-1zM171 394h1v5h-1zM325 307h1v2h-1zM102 379h1v5h-1zM162 428h1v4h-1zM281 381h1v4h-1zM113 425h1v4h-1zM403 227h1v1h-1zM115 433h1v4h-1zM556 213h1v4h-1zM59 310h1v2h-1zM473 178h1v1h-1zM626 277h1v2h-1zM558 220h1v3h-1zM506 211h1v1h-1zM453 205h1v3h-1zM559 223h1v4h-1zM348 268h1v1h-1zM529 200h1v3h-1zM43 306h1v1h-1zM392 230h1v3h-1zM87 349h1v2h-1zM461 181h1v3h-1zM562 233h1v3h-1zM108 406h1v4h-1zM753 209h1v3h-1zM437 237h1v2h-1zM157 448h1v5h-1zM551 196h1v3h-1zM760 225h1v2h-1zM201 347h1v3h-1zM288 348h1v5h-1zM645 244h1v1h-1zM657 217h1v3h-1zM448 221h1v4h-1zM386 247h1v3h-1zM29 275h1v3h-1zM727 170h1v2h-1zM746 183h1v4h-1zM258 365h1v2h-1zM161 432h1v4h-1zM54 306h1v1h-1zM302 291h1v1h-1zM293 320h1v5h-1zM480 185h1v2h-1zM35 292h1v2h-1zM141 459h1v1h-1zM416 248h1v2h-1zM395 226h1v1h-1zM510 212h1v2h-1zM122 445h1v1h-1zM625 279h1v3h-1zM417 250h1v2h-1zM332 290h1v3h-1zM497 215h1v1h-1zM391 233h1v2h-1zM268 388h1v4h-1zM778 233h1v1h-1zM284 369h1v4h-1zM734 163h1v1h-1zM544 182h1v1h-1zM436 239h1v2h-1zM565 241h1v2h-1zM6 283h1v1h-1zM536 182h1v2h-1zM718 195h1v2h-1zM656 220h1v2h-1zM447 225h1v3h-1zM601 285h1v1h-1zM668 195h1v1h-1zM432 246h1v2h-1zM471 175h1v2h-1zM385 250h1v3h-1zM114 429h1v4h-1zM555 209h1v4h-1zM427 253h1v1h-1zM196 357h1v2h-1zM169 403h1v4h-1zM227 343h1v3h-1zM557 217h1v3h-1zM279 389h1v4h-1zM292 325h1v6h-1zM586 282h1v1h-1zM148 465h1v1h-1zM209 331h1v2h-1zM177 379h1v2h-1zM297 299h1v4h-1zM752 206h1v3h-1zM331 293h1v2h-1zM107 402h1v4h-1zM758 221h1v2h-1zM550 193h1v3h-1zM741 168h1v2h-1zM435 241h1v2h-1zM759 223h1v2h-1zM535 184h1v3h-1zM164 420h1v4h-1zM339 274h1v2h-1zM155 457h1v4h-1zM430 249h1v2h-1zM604 285h1v1h-1zM575 257h1v3h-1zM30 278h1v3h-1zM216 325h1v1h-1zM256 361h1v2h-1zM717 197h1v3h-1zM745 179h1v4h-1zM467 172h1v1h-1zM694 214h1v1h-1zM249 358h1v1h-1zM34 290h1v2h-1zM579 267h1v3h-1zM511 214h1v1h-1zM582 274h1v2h-1zM143 461h1v1h-1zM512 215h1v2h-1zM504 211h1v1h-1zM159 440h1v4h-1zM291 331h1v6h-1zM264 377h1v2h-1zM237 361h1v1h-1zM208 333h1v2h-1zM652 230h1v3h-1zM238 362h1v1h-1zM296 303h1v6h-1zM450 215h1v3h-1zM564 238h1v3h-1zM623 285h1v4h-1zM204 341h1v2h-1zM705 214h1v1h-1zM163 424h1v4h-1zM338 276h1v2h-1zM154 461h1v4h-1zM18 271h1v1h-1zM690 210h1v2h-1zM226 341h1v2h-1zM63 315h1v1h-1zM52 305h1v1h-1zM507 211h1v1h-1zM349 268h1v1h-1zM158 444h1v4h-1zM78 335h1v2h-1zM285 364h1v5h-1zM739 166h1v1h-1zM380 268h1v2h-1zM708 214h1v1h-1zM449 218h1v3h-1zM573 253h1v2h-1zM629 270h1v2h-1zM674 193h1v1h-1zM574 255h1v2h-1zM324 309h1v1h-1zM218 326h1v2h-1zM580 270h1v2h-1zM728 168h1v2h-1zM581 272h1v2h-1zM513 217h1v1h-1zM70 320h1v2h-1zM265 379h1v2h-1zM440 231h1v2h-1zM514 218h1v1h-1zM116 437h1v4h-1zM484 194h1v2h-1zM638 252h1v2h-1zM266 381h1v4h-1zM487 200h1v2h-1zM239 363h1v1h-1zM84 345h1v2h-1zM498 214h1v1h-1zM166 414h1v3h-1zM240 364h1v1h-1zM735 163h1v1h-1zM545 182h1v2h-1zM649 238h1v2h-1zM98 362h1v4h-1zM109 410h1v3h-1zM25 268h1v1h-1zM379 270h1v2h-1zM112 421h1v4h-1zM186 370h1v1h-1zM213 324h1v1h-1zM602 285h1v1h-1zM688 208h1v1h-1zM475 180h1v1h-1zM669 194h1v1h-1zM406 229h1v1h-1zM692 213h1v2h-1zM214 324h1v1h-1zM641 248h1v1h-1zM465 171h1v2h-1zM410 235h1v2h-1zM13 276h1v1h-1zM197 356h1v1h-1zM242 364h1v1h-1zM105 394h1v4h-1zM36 294h1v2h-1zM76 331h1v2h-1zM637 254h1v2h-1zM452 208h1v3h-1zM528 203h1v2h-1zM174 385h1v2h-1zM272 400h1v3h-1zM633 262h1v2h-1zM572 251h1v2h-1zM5 284h1v1h-1zM156 453h1v4h-1zM184 372h1v1h-1zM524 211h1v2h-1zM605 285h1v1h-1zM431 248h1v1h-1zM220 329h1v2h-1zM695 214h1v1h-1zM456 196h1v3h-1zM17 272h1v1h-1zM57 308h1v1h-1zM464 173h1v3h-1zM58 309h1v1h-1zM160 436h1v4h-1zM505 211h1v1h-1zM714 205h1v2h-1zM516 220h1v1h-1zM347 268h1v1h-1zM343 270h1v1h-1zM382 261h1v4h-1zM86 348h1v1h-1zM755 214h1v3h-1zM90 353h1v2h-1zM706 214h1v1h-1zM632 264h1v2h-1zM282 377h1v4h-1zM762 230h1v2h-1zM523 213h1v2h-1zM408 232h1v1h-1zM311 298h1v2h-1zM518 220h1v1h-1zM248 359h1v1h-1zM314 303h1v2h-1zM455 199h1v3h-1zM31 281h1v3h-1zM257 363h1v2h-1zM478 182h1v2h-1zM315 305h1v2h-1zM260 369h1v2h-1zM531 195h1v2h-1zM335 282h1v3h-1zM53 305h1v1h-1zM508 211h1v1h-1zM125 446h1v1h-1zM38 298h1v2h-1zM49 307h1v1h-1zM439 233h1v2h-1zM713 207h1v2h-1zM267 385h1v3h-1zM419 254h1v2h-1zM496 214h1v1h-1zM542 181h1v1h-1zM709 214h1v1h-1zM721 187h1v3h-1zM274 402h1v2h-1zM733 162h1v1h-1zM100 370h1v4h-1zM326 305h1v2h-1zM607 287h1v1h-1zM643 246h1v1h-1zM222 332h1v2h-1zM396 225h1v1h-1zM470 174h1v1h-1zM627 274h1v3h-1zM596 286h1v1h-1zM334 285h1v2h-1zM454 202h1v3h-1zM229 348h1v2h-1zM530 197h1v3h-1zM750 200h1v3h-1zM438 235h1v2h-1zM712 209h1v2h-1zM88 351h1v1h-1zM106 398h1v4h-1zM92 356h1v2h-1zM743 173h1v3h-1zM720 190h1v2h-1zM458 190h1v3h-1zM658 215h1v2h-1zM761 227h1v3h-1zM476 180h1v1h-1zM313 302h1v1h-1zM183 372h1v1h-1zM399 225h1v1h-1zM577 262h1v3h-1zM259 367h1v2h-1zM134 452h1v1h-1zM153 465h1v3h-1zM666 196h1v1h-1zM178 378h1v1h-1zM55 307h1v1h-1zM425 255h1v1h-1zM584 278h1v2h-1zM591 287h1v1h-1zM333 287h1v3h-1zM299 294h1v3h-1zM418 252h1v2h-1zM235 359h1v1h-1zM190 365h1v1h-1zM537 180h1v2h-1zM378 272h1v2h-1zM289 343h1v5h-1zM185 371h1v1h-1zM294 314h1v6h-1zM472 177h1v1h-1zM355 266h1v1h-1zM61 313h1v1h-1zM247 360h1v1h-1zM130 449h1v1h-1zM62 314h1v1h-1zM665 197h1v2h-1zM423 256h1v1h-1zM228 346h1v2h-1zM749 196h1v4h-1zM723 180h1v3h-1zM344 269h1v1h-1zM390 235h1v3h-1zM276 399h1v2h-1zM173 387h1v3h-1zM540 180h1v1h-1zM94 359h1v1h-1zM742 170h1v3h-1zM672 192h1v1h-1zM328 301h1v2h-1zM771 234h1v1h-1zM576 260h1v2h-1zM101 374h1v5h-1zM16 273h1v1h-1zM519 219h1v1h-1zM68 319h1v1h-1zM583 276h1v2h-1zM486 198h1v2h-1zM543 181h1v1h-1zM722 183h1v4h-1zM547 186h1v2h-1zM568 246h1v1h-1zM322 311h1v1h-1zM287 353h1v6h-1zM474 179h1v1h-1zM597 286h1v1h-1zM412 240h1v2h-1zM64 316h1v1h-1zM651 233h1v2h-1zM740 167h1v1h-1zM732 163h1v1h-1zM203 343h1v2h-1zM647 241h1v2h-1zM642 247h1v1h-1zM599 285h1v1h-1zM655 222h1v3h-1zM446 228h1v4h-1zM384 253h1v4h-1zM127 447h1v1h-1zM354 266h1v1h-1zM120 444h1v1h-1zM422 257h1v1h-1zM488 202h1v2h-1zM560 227h1v3h-1zM330 295h1v3h-1zM754 212h1v2h-1zM546 184h1v2h-1zM538 180h1v1h-1zM677 195h1v1h-1zM570 248h1v2h-1zM646 243h1v1h-1zM552 199h1v3h-1zM26 269h1v2h-1zM764 234h1v2h-1zM170 399h1v4h-1zM534 187h1v2h-1zM182 373h1v1h-1zM356 265h1v1h-1zM262 373h1v2h-1zM411 237h1v3h-1zM424 256h1v1h-1zM352 267h1v1h-1zM77 333h1v2h-1zM40 302h1v2h-1zM80 338h1v2h-1zM194 360h1v2h-1zM662 204h1v3h-1zM165 417h1v3h-1zM541 180h1v1h-1zM189 366h1v1h-1zM95 359h1v1h-1zM703 214h1v1h-1zM224 336h1v2h-1zM533 189h1v3h-1zM428 252h1v1h-1zM246 361h1v1h-1zM50 306h1v1h-1zM69 319h1v1h-1zM275 401h1v1h-1zM661 207h1v3h-1zM679 197h1v1h-1zM327 303h1v2h-1zM770 235h1v2h-1zM680 198h1v1h-1zM763 232h1v2h-1zM628 272h1v2h-1zM323 310h1v1h-1zM132 450h1v1h-1zM316 307h1v2h-1zM261 371h1v2h-1zM133 451h1v1h-1zM168 407h1v3h-1zM82 341h1v2h-1zM420 256h1v2h-1zM460 184h1v3h-1zM271 398h1v2h-1zM660 210h1v2h-1zM97 360h1v2h-1zM172 390h1v4h-1zM23 268h1v1h-1zM675 194h1v1h-1zM219 328h1v1h-1zM600 285h1v1h-1zM362 264h1v1h-1zM200 350h1v2h-1zM212 325h1v2h-1zM223 334h1v2h-1zM71 322h1v2h-1zM726 172h1v2h-1zM60 312h1v1h-1zM393 228h1v2h-1zM129 448h1v1h-1zM230 350h1v2h-1zM121 444h1v1h-1zM451 211h1v4h-1zM434 243h1v2h-1zM527 205h1v2h-1zM93 358h1v1h-1zM376 274h1v1h-1zM682 200h1v1h-1zM317 309h1v1h-1zM477 181h1v1h-1zM66 318h1v1h-1zM199 352h1v2h-1zM211 327h1v2h-1zM103 384h1v5h-1zM318 310h1v1h-1zM481 187h1v2h-1zM353 267h1v1h-1zM135 453h1v1h-1zM421 258h1v1h-1zM44 307h1v1h-1zM704 214h1v1h-1zM433 245h1v1h-1zM719 192h1v3h-1zM457 193h1v3h-1zM221 331h1v1h-1zM255 359h1v2h-1zM670 193h1v1h-1zM33 287h1v3h-1zM517 221h1v1h-1zM414 244h1v2h-1zM210 329h1v2h-1zM654 225h1v2h-1zM142 460h1v1h-1zM383 257h1v4h-1zM298 297h1v2h-1zM9 281h1v1h-1zM47 307h1v1h-1zM91 355h1v1h-1zM340 272h1v2h-1zM707 214h1v1h-1zM21 268h1v1h-1zM684 203h1v1h-1zM387 244h1v3h-1zM305 292h1v1h-1zM767 237h1v1h-1zM479 184h1v1h-1zM319 311h1v1h-1zM781 234h1v1h-1zM561 230h1v3h-1zM490 205h1v2h-1zM205 339h1v2h-1zM756 217h1v2h-1zM769 237h1v1h-1zM698 213h1v1h-1zM730 165h1v1h-1zM24 268h1v1h-1zM620 293h1v1h-1zM676 194h1v1h-1zM253 356h1v1h-1zM28 273h1v2h-1zM254 357h1v2h-1zM104 389h1v5h-1zM413 242h1v2h-1zM351 267h1v1h-1zM381 265h1v3h-1zM701 213h1v1h-1zM283 373h1v4h-1zM729 166h1v2h-1zM686 205h1v1h-1zM404 227h1v1h-1zM369 269h1v1h-1zM307 294h1v1h-1zM397 224h1v1h-1zM180 375h1v1h-1zM67 318h1v1h-1zM639 251h1v1h-1zM585 280h1v2h-1zM442 231h1v1h-1zM725 174h1v2h-1zM195 359h1v1h-1zM664 199h1v3h-1zM278 393h1v4h-1zM176 381h1v2h-1zM751 203h1v3h-1zM45 307h1v1h-1zM783 236h1v1h-1zM489 204h1v1h-1zM635 258h1v2h-1zM500 213h1v1h-1zM492 208h1v2h-1zM342 270h1v1h-1zM784 237h1v1h-1zM526 207h1v2h-1zM566 243h1v1h-1zM389 238h1v3h-1zM757 219h1v2h-1zM549 190h1v3h-1zM567 244h1v2h-1zM295 309h1v5h-1zM187 368h1v2h-1zM110 413h1v4h-1zM678 196h1v1h-1zM364 265h1v1h-1zM27 271h1v2h-1zM671 193h1v1h-1zM429 251h1v1h-1zM365 266h1v1h-1zM303 291h1v1h-1zM747 187h1v5h-1zM198 354h1v2h-1zM716 200h1v2h-1zM179 376h1v2h-1zM123 445h1v1h-1zM15 274h1v1h-1zM502 212h1v1h-1zM124 446h1v1h-1zM48 307h1v1h-1zM10 280h1v1h-1zM175 383h1v2h-1zM81 340h1v1h-1zM779 233h1v1h-1zM207 335h1v2h-1zM634 260h1v2h-1zM329 298h1v3h-1zM525 209h1v2h-1zM673 192h1v1h-1zM610 289h1v1h-1zM768 237h1v1h-1zM337 278h1v2h-1zM320 311h1v1h-1zM225 338h1v3h-1zM137 455h1v1h-1zM321 312h1v1h-1zM138 456h1v1h-1zM715 202h1v3h-1zM653 227h1v3h-1zM73 326h1v1h-1zM232 354h1v2h-1zM494 211h1v1h-1zM621 292h1v2h-1zM217 325h1v1h-1zM606 286h1v1h-1zM336 280h1v2h-1zM402 226h1v1h-1zM280 385h1v4h-1zM32 284h1v3h-1zM520 218h1v1h-1zM532 192h1v3h-1zM598 286h1v1h-1zM65 317h1v1h-1zM394 227h1v1h-1zM483 191h1v3h-1zM79 337h1v1h-1zM42 306h1v1h-1zM39 300h1v2h-1zM83 343h1v2h-1zM710 212h1v2h-1zM702 213h1v1h-1zM111 417h1v4h-1zM308 294h1v1h-1zM554 205h1v4h-1zM409 233h1v2h-1zM309 295h1v1h-1zM301 290h1v2h-1zM312 300h1v2h-1zM748 192h1v4h-1zM128 448h1v1h-1zM181 374h1v1h-1zM139 457h1v1h-1zM589 285h1v1h-1zM515 219h1v1h-1zM640 249h1v2h-1zM75 329h1v2h-1zM350 268h1v1h-1zM140 458h1v1h-1zM151 467h1v1h-1zM234 358h1v1h-1zM46 307h1v1h-1zM776 232h1v1h-1zM501 213h1v1h-1zM231 352h1v2h-1zM624 282h1v3h-1zM636 256h1v2h-1zM459 187h1v3h-1zM615 291h1v1h-1zM744 176h1v3h-1zM683 201h1v2h-1zM578 265h1v2h-1zM263 375h1v2h-1zM146 464h1v1h-1zM300 292h1v2h-1zM463 176h1v2h-1zM503 212h1v1h-1zM482 189h1v2h-1zM245 362h1v1h-1zM117 441h1v2h-1zM499 214h1v1h-1zM341 271h1v1h-1zM96 360h1v1h-1zM7 282h1v1h-1zM618 292h1v1h-1zM371 271h1v1h-1zM631 266h1v2h-1zM372 272h1v1h-1zM619 292h1v1h-1zM522 215h1v2h-1zM310 296h1v2h-1zM553 202h1v3h-1zM51 306h1v1h-1zM445 232h1v2h-1zM14 275h1v1h-1zM243 363h1v1h-1zM236 360h1v1h-1zM681 199h1v1h-1zM273 403h1v2h-1zM367 268h1v1h-1zM359 264h1v1h-1zM250 357h1v1h-1zM630 268h1v2h-1zM306 293h1v1h-1zM594 287h1v1h-1zM126 447h1v1h-1zM118 443h1v1h-1zM441 230h1v1h-1zM782 235h1v1h-1zM774 231h1v1h-1zM738 165h1v1h-1zM711 211h1v1h-1zM775 232h1v1h-1zM548 188h1v2h-1zM613 291h1v1h-1zM363 265h1v1h-1zM509 211h1v1h-1zM152 467h1v1h-1zM777 232h1v1h-1zM188 367h1v1h-1zM616 291h1v1h-1zM608 287h1v1h-1zM377 274h1v1h-1zM609 288h1v1h-1zM687 206h1v2h-1zM644 245h1v1h-1zM136 454h1v1h-1zM72 324h1v2h-1zM192 363h1v1h-1zM8 282h1v1h-1zM400 225h1v1h-1zM765 236h1v2h-1zM20 269h1v1h-1zM358 264h1v1h-1zM131 450h1v1h-1zM56 307h1v1h-1zM592 287h1v1h-1zM244 363h1v1h-1zM593 288h1v1h-1zM485 196h1v2h-1zM663 202h1v2h-1zM41 304h1v2h-1zM563 236h1v2h-1zM85 347h1v1h-1zM736 164h1v1h-1zM685 204h1v1h-1zM368 268h1v1h-1zM696 213h1v1h-1zM251 357h1v1h-1zM22 268h1v1h-1zM360 263h1v1h-1zM521 217h1v1h-1zM611 290h1v1h-1zM407 230h1v2h-1zM595 287h1v1h-1zM587 283h1v1h-1zM149 466h1v1h-1zM119 443h1v1h-1zM588 284h1v1h-1zM74 327h1v2h-1zM491 207h1v1h-1zM345 269h1v1h-1zM569 247h1v1h-1zM699 213h1v1h-1zM374 273h1v1h-1zM614 291h1v1h-1zM375 274h1v1h-1zM468 173h1v1h-1zM469 173h1v1h-1zM144 462h1v1h-1zM145 463h1v1h-1zM731 164h1v1h-1zM617 291h1v1h-1zM405 228h1v1h-1zM370 270h1v1h-1zM691 212h1v1h-1zM398 224h1v1h-1zM443 232h1v1h-1zM444 232h1v1h-1zM590 286h1v1h-1zM493 210h1v1h-1zM785 238h1v1h-1zM193 362h1v1h-1zM571 250h1v1h-1zM648 240h1v1h-1zM401 225h1v1h-1zM366 267h1v1h-1zM667 195h1v1h-1zM304 292h1v1h-1zM766 237h1v1h-1zM426 254h1v1h-1zM147 465h1v1h-1zM12 277h1v1h-1zM241 365h1v1h-1zM780 234h1v1h-1zM191 364h1v1h-1zM773 231h1v1h-1zM89 352h1v1h-1zM539 180h1v1h-1zM737 164h1v1h-1zM697 213h1v1h-1zM689 209h1v1h-1zM603 285h1v1h-1zM361 263h1v1h-1zM252 356h1v1h-1zM693 215h1v1h-1zM215 325h1v1h-1zM612 290h1v1h-1zM19 270h1v1h-1zM373 273h1v1h-1zM466 172h1v1h-1zM357 265h1v1h-1zM150 466h1v1h-1z"/>
<path fill="#ff0000" d="M260 132h20v1h-20zM321 135h20v1h-20zM850 161h21v1h-21zM891 163h20v1h-20zM586 148h20v1h-20zM911 164h21v1h-21zM952 166h20v1h-20zM301 134h20v1h-20zM402 139h21v1h-21zM16 120h20v1h-20zM36 121h20v1h-20zM362 137h20v1h-20zM932 165h20v1h-20zM606 149h20v1h-20zM667 152h20v1h-20zM341 136h21v1h-21zM708 154h20v1h-20zM382 138h20v1h-20zM56 122h21v1h-21zM117 125h21v1h-21zM687 153h21v1h-21zM423 140h20v1h-20zM748 156h21v1h-21zM463 142h21v1h-21zM138 126h20v1h-20zM199 129h20v1h-20zM525 145h20v1h-20zM728 155h20v1h-20zM504 144h21v1h-21zM769 157h20v1h-20zM830 160h20v1h-20zM219 130h21v1h-21zM280 133h21v1h-21zM809 159h21v1h-21zM871 162h20v1h-20zM5 119h11v1h-11zM97 124h20v1h-20zM565 147h21v1h-21zM77 123h20v1h-20zM443 141h20v1h-20zM972 167h10v1h-10zM484 143h20v1h-20zM158 127h21v1h-21zM789 158h20v1h-20zM179 128h20v1h-20zM240 131h20v1h-20zM545 146h20v1h-20zM647 151h20v1h-20zM626 150h21v1h-21z"/>
<path fill="#ff0000" d="M316 137h18v1h-18zM353 139h19v1h-19zM372 140h19v1h-19zM409 142h19v1h-19zM879 167h19v1h-19zM597 152h19v1h-19zM635 154h19v1h-19zM109 126h19v1h-19zM203 131h19v1h-19zM334 138h19v1h-19zM391 141h18v1h-18zM447 144h19v1h-19zM428 143h19v1h-19zM485 146h18v1h-18zM616 153h19v1h-19zM672 156h19v1h-19zM710 158h19v1h-19zM184 130h19v1h-19zM766 161h19v1h-19zM898 168h19v1h-19zM936 170h18v1h-18zM503 147h19v1h-19zM222 132h18v1h-18zM691 157h19v1h-19zM729 159h19v1h-19zM748 160h18v1h-18zM785 162h19v1h-19zM15 121h19v1h-19zM71 124h19v1h-19zM973 172h9v1h-9zM579 151h18v1h-18zM297 136h19v1h-19zM522 148h19v1h-19zM823 164h19v1h-19zM860 166h19v1h-19zM90 125h19v1h-19zM146 128h19v1h-19zM842 165h18v1h-18zM165 129h19v1h-19zM917 169h19v1h-19zM240 133h19v1h-19zM954 171h19v1h-19zM466 145h19v1h-19zM34 122h18v1h-18zM541 149h19v1h-19zM259 134h19v1h-19zM52 123h19v1h-19zM804 163h19v1h-19zM128 127h18v1h-18zM5 120h10v1h-10zM278 135h19v1h-19zM560 150h19v1h-19zM654 155h18v1h-18z"/>
<path fill="#ff0000" d="M407 396h3v1h-3zM726 271h3v1h-3zM685 287h3v1h-3zM344 421h2v1h-2zM229 466h2v1h-2zM662 296h3v1h-3zM910 199h2v1h-2zM846 224h3v1h-3zM313 433h2v1h-2zM198 478h3v1h-3zM632 308h2v1h-2zM290 442h3v1h-3zM879 211h3v1h-3zM175 487h3v1h-3zM815 236h3v1h-3zM721 273h3v1h-3zM259 454h3v1h-3zM606 318h3v1h-3zM785 248h2v1h-2zM443 382h3v1h-3zM328 427h3v1h-3zM690 285h3v1h-3zM512 355h2v1h-2zM298 439h2v1h-2zM731 269h3v1h-3zM979 172h2v1h-2zM275 448h2v1h-2zM203 476h3v1h-3zM522 351h3v1h-3zM458 376h3v1h-3zM821 234h2v1h-2zM706 279h2v1h-2zM244 460h3v1h-3zM491 363h3v1h-3zM884 209h3v1h-3zM889 207h3v1h-3zM428 388h2v1h-2zM790 246h2v1h-2zM675 291h3v1h-3zM213 472h3v1h-3zM611 316h3v1h-3zM974 174h2v1h-2zM859 219h2v1h-2zM397 400h3v1h-3zM517 353h3v1h-3zM581 328h2v1h-2zM239 462h3v1h-3zM828 231h3v1h-3zM486 365h3v1h-3zM805 240h3v1h-3zM591 324h3v1h-3zM208 474h3v1h-3zM527 349h3v1h-3zM775 252h2v1h-2zM318 431h3v1h-3zM958 180h3v1h-3zM497 361h2v1h-2zM616 314h3v1h-3zM744 264h3v1h-3zM287 443h3v1h-3zM680 289h3v1h-3zM800 242h3v1h-3zM928 192h2v1h-2zM224 468h2v1h-2zM586 326h2v1h-2zM471 371h3v1h-3zM905 201h2v1h-2zM193 480h3v1h-3zM440 383h3v1h-3zM874 213h3v1h-3zM377 408h2v1h-2zM418 392h2v1h-2zM596 322h3v1h-3zM601 320h3v1h-3zM387 404h2v1h-2zM323 429h3v1h-3zM571 332h2v1h-2zM356 416h3v1h-3zM869 215h3v1h-3zM754 260h3v1h-3zM293 441h2v1h-2zM412 394h3v1h-3zM540 344h2v1h-2zM476 369h3v1h-3zM724 272h2v1h-2zM382 406h2v1h-2zM267 451h3v1h-3zM701 281h2v1h-2zM948 184h3v1h-3zM351 418h3v1h-3zM236 463h3v1h-3zM670 293h3v1h-3zM917 196h3v1h-3zM456 377h2v1h-2zM854 221h2v1h-2zM392 402h3v1h-3zM639 305h3v1h-3zM183 484h2v1h-2zM823 233h3v1h-3zM943 186h3v1h-3zM481 367h3v1h-3zM366 412h3v1h-3zM550 340h3v1h-3zM451 379h2v1h-2zM336 424h2v1h-2zM770 254h2v1h-2zM272 449h3v1h-3zM520 352h2v1h-2zM560 336h3v1h-3zM953 182h3v1h-3zM178 486h2v1h-2zM739 266h2v1h-2zM242 461h2v1h-2zM282 445h3v1h-3zM923 194h2v1h-2zM466 373h3v1h-3zM713 276h3v1h-3zM252 457h2v1h-2zM650 301h2v1h-2zM897 204h3v1h-3zM435 385h3v1h-3zM619 313h3v1h-3zM277 447h3v1h-3zM866 216h3v1h-3zM162 492h3v1h-3zM843 225h3v1h-3zM247 459h2v1h-2zM565 334h3v1h-3zM813 237h2v1h-2zM749 262h3v1h-3zM535 346h2v1h-2zM782 249h3v1h-3zM718 274h3v1h-3zM966 177h2v1h-2zM262 453h2v1h-2zM509 356h3v1h-3zM902 202h3v1h-3zM446 381h2v1h-2zM808 239h2v1h-2zM693 284h3v1h-3zM231 465h3v1h-3zM912 198h3v1h-3zM415 393h3v1h-3zM634 307h3v1h-3zM882 210h2v1h-2zM425 389h3v1h-3zM384 405h3v1h-3zM818 235h3v1h-3zM361 414h3v1h-3zM609 317h2v1h-2zM545 342h3v1h-3zM792 245h3v1h-3zM331 426h2v1h-2zM578 329h3v1h-3zM514 354h3v1h-3zM877 212h2v1h-2zM762 257h2v1h-2zM305 436h3v1h-3zM346 420h3v1h-3zM708 278h3v1h-3zM892 206h2v1h-2zM430 387h3v1h-3zM777 251h3v1h-3zM315 432h3v1h-3zM678 290h2v1h-2zM221 469h3v1h-3zM861 218h3v1h-3zM157 494h3v1h-3zM405 397h2v1h-2zM190 481h3v1h-3zM341 422h3v1h-3zM588 325h3v1h-3zM374 409h3v1h-3zM310 434h3v1h-3zM558 337h2v1h-2zM280 446h2v1h-2zM321 430h2v1h-2zM961 179h2v1h-2zM504 358h3v1h-3zM389 403h3v1h-3zM688 286h2v1h-2zM226 467h3v1h-3zM935 189h3v1h-3zM474 370h2v1h-2zM872 214h2v1h-2zM657 298h3v1h-3zM196 479h2v1h-2zM976 173h3v1h-3zM201 477h2v1h-2zM379 407h3v1h-3zM946 185h2v1h-2zM170 489h3v1h-3zM604 319h2v1h-2zM489 364h2v1h-2zM851 222h3v1h-3zM787 247h3v1h-3zM211 473h2v1h-2zM573 331h3v1h-3zM971 175h3v1h-3zM757 259h2v1h-2zM642 304h3v1h-3zM180 485h3v1h-3zM300 438h3v1h-3zM940 187h3v1h-3zM484 366h2v1h-2zM270 450h2v1h-2zM951 183h2v1h-2zM453 378h3v1h-3zM772 253h3v1h-3zM920 195h3v1h-3zM423 390h2v1h-2zM856 220h3v1h-3zM741 265h3v1h-3zM400 399h2v1h-2zM647 302h3v1h-3zM185 483h3v1h-3zM583 327h3v1h-3zM711 277h2v1h-2zM831 230h2v1h-2zM369 411h3v1h-3zM254 456h3v1h-3zM767 255h3v1h-3zM553 339h2v1h-2zM438 384h2v1h-2zM338 423h3v1h-3zM736 267h3v1h-3zM841 226h2v1h-2zM499 360h3v1h-3zM747 263h2v1h-2zM249 458h3v1h-3zM810 238h3v1h-3zM930 191h3v1h-3zM469 372h2v1h-2zM354 417h2v1h-2zM716 275h2v1h-2zM652 300h3v1h-3zM537 345h3v1h-3zM900 203h2v1h-2zM622 312h2v1h-2zM968 176h3v1h-3zM507 357h2v1h-2zM627 310h2v1h-2zM165 491h3v1h-3zM349 419h2v1h-2zM234 464h2v1h-2zM915 197h2v1h-2zM637 306h2v1h-2zM295 440h3v1h-3zM542 343h3v1h-3zM264 452h3v1h-3zM448 380h3v1h-3zM333 425h3v1h-3zM696 283h2v1h-2zM764 256h3v1h-3zM303 437h2v1h-2zM665 295h2v1h-2zM826 232h2v1h-2zM433 386h2v1h-2zM795 244h3v1h-3zM219 470h2v1h-2zM864 217h2v1h-2zM402 398h3v1h-3zM308 435h2v1h-2zM833 229h3v1h-3zM925 193h3v1h-3zM532 347h3v1h-3zM461 375h2v1h-2zM894 205h3v1h-3zM780 250h2v1h-2zM963 178h3v1h-3zM502 359h2v1h-2zM933 190h2v1h-2zM838 227h3v1h-3zM660 297h2v1h-2zM629 309h3v1h-3zM168 490h2v1h-2zM849 223h2v1h-2zM576 330h2v1h-2zM938 188h2v1h-2zM759 258h3v1h-3zM907 200h3v1h-3zM729 270h2v1h-2zM173 488h2v1h-2zM645 303h2v1h-2zM188 482h2v1h-2zM372 410h2v1h-2zM734 268h2v1h-2zM555 338h3v1h-3zM703 280h3v1h-3zM525 350h2v1h-2zM494 362h3v1h-3zM153 496h2v1h-2zM257 455h2v1h-2zM655 299h2v1h-2zM803 241h2v1h-2zM624 311h3v1h-3zM410 395h2v1h-2zM530 348h2v1h-2zM594 323h2v1h-2zM698 282h3v1h-3zM599 321h2v1h-2zM420 391h3v1h-3zM667 294h3v1h-3zM206 475h2v1h-2zM326 428h2v1h-2zM887 208h2v1h-2zM614 315h2v1h-2zM798 243h2v1h-2zM395 401h2v1h-2zM673 292h2v1h-2zM216 471h3v1h-3zM364 413h2v1h-2zM683 288h2v1h-2zM836 228h2v1h-2zM956 181h2v1h-2zM563 335h2v1h-2zM285 444h2v1h-2zM160 493h2v1h-2zM479 368h2v1h-2zM568 333h3v1h-3zM359 415h2v1h-2zM463 374h3v1h-3zM548 341h2v1h-2zM752 261h2v1h-2zM155 495h2v1h-2zM981 171h1v1h-1z"/>
<path fill="#ff0000" d="M673 268h2v1h-2zM657 281h1v1h-1zM844 135h2v1h-2zM783 183h1v1h-1zM658 280h1v1h-1zM663 276h1v1h-1zM646 289h2v1h-2zM878 109h1v1h-1zM758 202h2v1h-2zM633 299h2v1h-2zM866 118h2v1h-2zM741 215h2v1h-2zM747 211h1v1h-1zM853 128h2v1h-2zM748 210h1v1h-1zM837 141h1v1h-1zM842 137h1v1h-1zM843 136h1v1h-1zM660 278h2v1h-2zM723 229h2v1h-2zM757 203h1v1h-1zM636 297h1v1h-1zM762 199h1v1h-1zM637 296h2v1h-2zM745 212h2v1h-2zM626 305h1v1h-1zM732 222h2v1h-2zM627 304h1v1h-1zM841 138h1v1h-1zM857 125h2v1h-2zM721 231h1v1h-1zM847 133h1v1h-1zM722 230h1v1h-1zM727 226h2v1h-2zM830 146h2v1h-2zM816 157h1v1h-1zM641 293h1v1h-1zM806 165h1v1h-1zM624 306h2v1h-2zM630 302h1v1h-1zM736 219h2v1h-2zM720 232h1v1h-1zM725 228h1v1h-1zM820 154h1v1h-1zM695 251h1v1h-1zM821 153h2v1h-2zM700 247h2v1h-2zM803 167h2v1h-2zM826 149h2v1h-2zM810 162h1v1h-1zM628 303h2v1h-2zM615 313h2v1h-2zM785 181h2v1h-2zM880 107h2v1h-2zM824 151h1v1h-1zM699 248h1v1h-1zM705 243h2v1h-2zM687 257h2v1h-2zM808 163h2v1h-2zM689 256h1v1h-1zM799 170h2v1h-2zM814 159h1v1h-1zM784 182h1v1h-1zM789 178h1v1h-1zM664 275h2v1h-2zM772 191h2v1h-2zM703 245h1v1h-1zM868 117h1v1h-1zM691 254h2v1h-2zM693 253h1v1h-1zM678 264h2v1h-2zM781 184h2v1h-2zM787 180h1v1h-1zM662 277h1v1h-1zM788 179h1v1h-1zM668 272h1v1h-1zM882 106h1v1h-1zM776 188h2v1h-2zM651 285h2v1h-2zM883 105h1v1h-1zM763 198h2v1h-2zM871 114h2v1h-2zM873 113h1v1h-1zM752 207h1v1h-1zM682 261h2v1h-2zM848 132h2v1h-2zM666 274h1v1h-1zM667 273h1v1h-1zM672 269h1v1h-1zM761 200h1v1h-1zM655 282h2v1h-2zM767 195h2v1h-2zM642 292h2v1h-2zM875 111h2v1h-2zM750 208h2v1h-2zM861 122h1v1h-1zM756 204h1v1h-1zM631 301h1v1h-1zM862 121h2v1h-2zM846 134h1v1h-1zM851 130h1v1h-1zM726 227h1v1h-1zM669 271h2v1h-2zM852 129h1v1h-1zM765 197h1v1h-1zM640 294h1v1h-1zM645 290h1v1h-1zM754 205h2v1h-2zM740 216h1v1h-1zM635 298h1v1h-1zM850 131h1v1h-1zM730 224h1v1h-1zM731 223h1v1h-1zM839 139h2v1h-2zM825 150h1v1h-1zM644 291h1v1h-1zM744 213h1v1h-1zM619 310h2v1h-2zM639 295h1v1h-1zM729 225h1v1h-1zM734 221h1v1h-1zM614 314h1v1h-1zM829 147h1v1h-1zM704 244h1v1h-1zM648 288h1v1h-1zM709 240h2v1h-2zM812 160h2v1h-2zM817 156h2v1h-2zM819 155h1v1h-1zM623 307h1v1h-1zM794 174h2v1h-2zM613 315h1v1h-1zM828 148h1v1h-1zM707 242h1v1h-1zM833 144h1v1h-1zM708 241h1v1h-1zM696 250h2v1h-2zM698 249h1v1h-1zM792 176h1v1h-1zM793 175h1v1h-1zM798 171h1v1h-1zM712 238h1v1h-1zM877 110h1v1h-1zM807 164h1v1h-1zM790 177h2v1h-2zM796 173h1v1h-1zM671 270h1v1h-1zM676 266h1v1h-1zM677 265h1v1h-1zM766 196h1v1h-1zM771 192h1v1h-1zM686 258h1v1h-1zM856 126h1v1h-1zM675 267h1v1h-1zM770 193h1v1h-1zM650 286h1v1h-1zM760 201h1v1h-1zM870 115h1v1h-1zM855 127h1v1h-1zM860 123h1v1h-1zM735 220h1v1h-1zM774 190h1v1h-1zM649 287h1v1h-1zM835 142h2v1h-2zM654 283h1v1h-1zM749 209h1v1h-1zM859 124h1v1h-1zM739 217h1v1h-1zM834 143h1v1h-1zM653 284h1v1h-1zM714 236h2v1h-2zM823 152h1v1h-1zM753 206h1v1h-1zM738 218h1v1h-1zM617 312h1v1h-1zM743 214h1v1h-1zM618 311h1v1h-1zM832 145h1v1h-1zM838 140h1v1h-1zM713 237h1v1h-1zM718 233h2v1h-2zM702 246h1v1h-1zM632 300h1v1h-1zM797 172h1v1h-1zM621 309h1v1h-1zM622 308h1v1h-1zM711 239h1v1h-1zM716 235h1v1h-1zM717 234h1v1h-1zM811 161h1v1h-1zM801 169h1v1h-1zM802 168h1v1h-1zM681 262h1v1h-1zM815 158h1v1h-1zM690 255h1v1h-1zM805 166h1v1h-1zM680 263h1v1h-1zM685 259h1v1h-1zM775 189h1v1h-1zM780 185h1v1h-1zM694 252h1v1h-1zM865 119h1v1h-1zM684 260h1v1h-1zM778 187h1v1h-1zM779 186h1v1h-1zM659 279h1v1h-1zM769 194h1v1h-1zM874 112h1v1h-1zM879 108h1v1h-1zM864 120h1v1h-1zM869 116h1v1h-1z"/>
</g>
<path fill="#00ff00" d="M5 202h2v1h-2zM5 201h1v3h-1zM8 207h3v1h-3zM9 206h1v3h-1zM12 211h3v1h-3zM13 210h1v3h-1zM16 215h3v1h-3zM17 214h1v3h-1zM20 218h3v1h-3zM21 217h1v3h-1zM24 222h3v1h-3zM25 221h1v3h-1zM28 225h3v1h-3zM29 224h1v3h-1zM32 231h3v1h-3zM33 230h1v3h-1zM36 239h3v1h-3zM37 238h1v3h-1zM40 246h3v1h-3zM41 245h1v3h-1zM44 253h3v1h-3zM45 252h1v3h-1zM48 259h3v1h-3zM49 258h1v3h-1zM52 265h3v1h-3zM53 264h1v3h-1zM56 270h3v1h-3zM57 269h1v3h-1zM60 277h3v1h-3zM61 276h1v3h-1zM64 283h3v1h-3zM65 282h1v3h-1zM68 288h3v1h-3zM69 287h1v3h-1zM72 293h3v1h-3zM73 292h1v3h-1zM76 300h3v1h-3zM77 299h1v3h-1zM80 310h3v1h-3zM81 309h1v3h-1zM84 319h3v1h-3zM85 318h1v3h-1zM88 327h3v1h-3zM89 326h1v3h-1zM92 333h3v1h-3zM93 332h1v3h-1zM96 338h3v1h-3zM97 337h1v3h-1zM100 344h3v1h-3zM101 343h1v3h-1zM104 356h3v1h-3zM105 355h1v3h-1zM108 356h3v1h-3zM109 355h1v3h-1zM112 376h3v1h-3zM113 375h1v3h-1zM116 393h3v1h-3zM117 392h1v3h-1zM120 405h3v1h-3zM121 404h1v3h-1zM124 415h3v1h-3zM125 414h1v3h-1zM128 468h3v1h-3zM129 467h1v3h-1zM132 420h3v1h-3zM133 419h1v3h-1zM136 420h3v1h-3zM137 419h1v3h-1zM140 421h3v1h-3zM141 420h1v3h-1zM144 422h3v1h-3zM145 421h1v3h-1zM148 423h3v1h-3zM149 422h1v3h-1zM152 425h3v1h-3zM153 424h1v3h-1zM156 496h3v1h-3zM157 495h1v3h-1zM160 496h3v1h-3zM161 495h1v3h-1zM164 492h3v1h-3zM165 491h1v3h-1zM168 485h3v1h-3zM169 484h1v3h-1zM172 478h3v1h-3zM173 477h1v3h-1zM176 471h3v1h-3zM177 470h1v3h-1zM180 462h3v1h-3zM181 461h1v3h-1zM184 450h3v1h-3zM185 449h1v3h-1zM188 438h3v1h-3zM189 437h1v3h-1zM192 427h3v1h-3zM193 426h1v3h-1zM196 417h3v1h-3zM197 416h1v3h-1zM200 405h3v1h-3zM201 404h1v3h-1zM204 391h3v1h-3zM205 390h1v3h-1zM208 378h3v1h-3zM209 377h1v3h-1zM212 365h3v1h-3zM213 364h1v3h-1zM216 302h3v1h-3zM217 301h1v3h-1zM220 302h3v1h-3zM221 301h1v3h-1zM224 304h3v1h-3zM225 303h1v3h-1zM228 309h3v1h-3zM229 308h1v3h-1zM232 313h3v1h-3zM233 312h1v3h-1zM236 316h3v1h-3zM237 315h1v3h-1zM240 321h3v1h-3zM241 320h1v3h-1zM244 326h3v1h-3zM245 325h1v3h-1zM248 331h3v1h-3zM249 330h1v3h-1zM252 335h3v1h-3zM253 334h1v3h-1zM256 335h3v1h-3zM257 334h1v3h-1zM260 338h3v1h-3zM261 337h1v3h-1zM264 338h3v1h-3zM265 337h1v3h-1zM268 346h3v1h-3zM269 345h1v3h-1zM272 353h3v1h-3zM273 352h1v3h-1zM276 361h3v1h-3zM277 360h1v3h-1zM280 420h3v1h-3zM281 419h1v3h-1zM284 418h3v1h-3zM285 417h1v3h-1zM288 413h3v1h-3zM289 412h1v3h-1zM292 408h3v1h-3zM293 407h1v3h-1zM296 400h3v1h-3zM297 399h1v3h-1zM300 391h3v1h-3zM301 390h1v3h-1zM304 377h3v1h-3zM305 376h1v3h-1zM308 366h3v1h-3zM309 365h1v3h-1zM312 355h3v1h-3zM313 354h1v3h-1zM316 345h3v1h-3zM317 344h1v3h-1zM320 337h3v1h-3zM321 336h1v3h-1zM324 258h3v1h-3zM325 257h1v3h-1zM328 343h3v1h-3zM329 342h1v3h-1zM332 343h3v1h-3zM333 342h1v3h-1zM336 341h3v1h-3zM337 340h1v3h-1zM340 339h3v1h-3zM341 338h1v3h-1zM344 336h3v1h-3zM345 335h1v3h-1zM348 333h3v1h-3zM349 332h1v3h-1zM352 330h3v1h-3zM353 329h1v3h-1zM356 325h3v1h-3zM357 324h1v3h-1zM360 321h3v1h-3zM361 320h1v3h-1zM364 316h3v1h-3zM365 315h1v3h-1zM368 312h3v1h-3zM369 311h1v3h-1zM372 308h3v1h-3zM373 307h1v3h-1zM376 305h3v1h-3zM377 304h1v3h-1zM380 302h3v1h-3zM381 301h1v3h-1zM384 295h3v1h-3zM385 294h1v3h-1zM388 293h3v1h-3zM389 292h1v3h-1zM392 285h3v1h-3zM393 284h1v3h-1zM396 276h3v1h-3zM397 275h1v3h-1zM400 268h3v1h-3zM401 267h1v3h-1zM404 261h3v1h-3zM405 260h1v3h-1zM408 255h3v1h-3zM409 254h1v3h-1zM412 209h3v1h-3zM413 208h1v3h-1zM416 210h3v1h-3zM417 209h1v3h-1zM420 212h3v1h-3zM421 211h1v3h-1zM424 280h3v1h-3zM425 279h1v3h-1zM428 278h3v1h-3zM429 277h1v3h-1zM432 277h3v1h-3zM433 276h1v3h-1zM436 276h3v1h-3zM437 275h1v3h-1zM440 274h3v1h-3zM441 273h1v3h-1zM444 273h3v1h-3zM445 272h1v3h-1zM448 272h3v1h-3zM449 271h1v3h-1zM452 267h3v1h-3zM453 266h1v3h-1zM456 260h3v1h-3zM457 259h1v3h-1zM460 254h3v1h-3zM461 253h1v3h-1zM464 248h3v1h-3zM465 247h1v3h-1zM468 242h3v1h-3zM469 241h1v3h-1zM472 237h3v1h-3zM473 236h1v3h-1zM476 232h3v1h-3zM477 231h1v3h-1zM480 227h3v1h-3zM481 226h1v3h-1zM484 153h3v1h-3zM485 152h1v3h-1zM488 155h3v1h-3zM489 154h1v3h-1zM492 158h3v1h-3zM493 157h1v3h-1zM496 161h3v1h-3zM497 160h1v3h-1zM500 164h3v1h-3zM501 163h1v3h-1zM504 166h3v1h-3zM505 165h1v3h-1zM508 231h3v1h-3zM509 230h1v3h-1zM512 166h3v1h-3zM513 165h1v3h-1zM516 166h3v1h-3zM517 165h1v3h-1zM520 168h3v1h-3zM521 167h1v3h-1zM524 263h3v1h-3zM525 262h1v3h-1zM528 261h3v1h-3zM529 260h1v3h-1zM532 259h3v1h-3zM533 258h1v3h-1zM536 257h3v1h-3zM537 256h1v3h-1zM540 255h3v1h-3zM541 254h1v3h-1zM544 253h3v1h-3zM545 252h1v3h-1zM548 249h3v1h-3zM549 248h1v3h-1zM552 151h3v1h-3zM553 150h1v3h-1zM556 154h3v1h-3zM557 153h1v3h-1zM560 156h3v1h-3zM561 155h1v3h-1zM564 158h3v1h-3zM565 157h1v3h-1zM568 161h3v1h-3zM569 160h1v3h-1zM572 166h3v1h-3zM573 165h1v3h-1zM576 174h3v1h-3zM577 173h1v3h-1zM580 181h3v1h-3zM581 180h1v3h-1zM584 188h3v1h-3zM585 187h1v3h-1zM588 198h3v1h-3zM589 197h1v3h-1zM592 206h3v1h-3zM593 205h1v3h-1zM596 214h3v1h-3zM597 213h1v3h-1zM600 221h3v1h-3zM601 220h1v3h-1zM604 230h3v1h-3zM605 229h1v3h-1zM608 237h3v1h-3zM609 236h1v3h-1zM612 244h3v1h-3zM613 243h1v3h-1zM616 253h3v1h-3zM617 252h1v3h-1zM620 260h3v1h-3zM621 259h1v3h-1zM624 315h3v1h-3zM625 314h1v3h-1zM628 314h3v1h-3zM629 313h1v3h-1zM632 312h3v1h-3zM633 311h1v3h-1zM636 310h3v1h-3zM637 309h1v3h-1zM640 309h3v1h-3zM641 308h1v3h-1zM644 308h3v1h-3zM645 307h1v3h-1zM648 306h3v1h-3zM649 305h1v3h-1zM652 301h3v1h-3zM653 300h1v3h-1zM656 297h3v1h-3zM657 296h1v3h-1zM660 292h3v1h-3zM661 291h1v3h-1zM664 288h3v1h-3zM665 287h1v3h-1zM668 284h3v1h-3zM669 283h1v3h-1zM672 278h3v1h-3zM673 277h1v3h-1zM676 269h3v1h-3zM677 268h1v3h-1zM680 261h3v1h-3zM681 260h1v3h-1zM684 254h3v1h-3zM685 253h1v3h-1zM688 247h3v1h-3zM689 246h1v3h-1zM692 241h3v1h-3zM693 240h1v3h-1zM696 170h3v1h-3zM697 169h1v3h-1zM700 172h3v1h-3zM701 171h1v3h-1zM704 173h3v1h-3zM705 172h1v3h-1zM708 175h3v1h-3zM709 174h1v3h-1zM712 250h3v1h-3zM713 249h1v3h-1zM716 248h3v1h-3zM717 247h1v3h-1zM720 245h3v1h-3zM721 244h1v3h-1zM724 240h3v1h-3zM725 239h1v3h-1zM728 232h3v1h-3zM729 231h1v3h-1zM732 222h3v1h-3zM733 221h1v3h-1zM736 212h3v1h-3zM737 211h1v3h-1zM740 204h3v1h-3zM741 203h1v3h-1zM744 130h3v1h-3zM745 129h1v3h-1zM748 131h3v1h-3zM749 130h1v3h-1zM752 136h3v1h-3zM753 135h1v3h-1zM756 142h3v1h-3zM757 141h1v3h-1zM760 151h3v1h-3zM761 150h1v3h-1zM764 158h3v1h-3zM765 157h1v3h-1zM768 166h3v1h-3zM769 165h1v3h-1zM772 172h3v1h-3zM773 171h1v3h-1zM776 178h3v1h-3zM777 177h1v3h-1zM780 186h3v1h-3zM781 185h1v3h-1zM784 193h3v1h-3zM785 192h1v3h-1z"/>
<path fill="#ffffff" d="M5 202h1v1h-1zM9 207h1v1h-1zM13 211h1v1h-1zM17 215h1v1h-1zM21 218h1v1h-1zM25 222h1v1h-1zM29 225h1v1h-1zM33 231h1v1h-1zM37 239h1v1h-1zM41 246h1v1h-1zM45 253h1v1h-1zM49 259h1v1h-1zM53 265h1v1h-1zM57 270h1v1h-1zM61 277h1v1h-1zM65 283h1v1h-1zM69 288h1v1h-1zM73 293h1v1h-1zM77 300h1v1h-1zM81 310h1v1h-1zM85 319h1v1h-1zM89 327h1v1h-1zM93 333h1v1h-1zM97 338h1v1h-1zM101 344h1v1h-1zM105 356h1v1h-1zM109 356h1v1h-1zM113 376h1v1h-1zM117 393h1v1h-1zM121 405h1v1h-1zM125 415h1v1h-1zM129 468h1v1h-1zM133 420h1v1h-1zM137 420h1v1h-1zM141 421h1v1h-1zM145 422h1v1h-1zM149 423h1v1h-1zM153 425h1v1h-1zM157 496h1v1h-1zM161 496h1v1h-1zM165 492h1v1h-1zM169 485h1v1h-1zM173 478h1v1h-1zM177 471h1v1h-1zM181 462h1v1h-1zM185 450h1v1h-1zM189 438h1v1h-1zM193 427h1v1h-1zM197 417h1v1h-1zM201 405h1v1h-1zM205 391h1v1h-1zM209 378h1v1h-1zM213 365h1v1h-1zM217 302h1v1h-1zM221 302h1v1h-1zM225 304h1v1h-1zM229 309h1v1h-1zM233 313h1v1h-1zM237 316h1v1h-1zM241 321h1v1h-1zM245 326h1v1h-1zM249 331h1v1h-1zM253 335h1v1h-1zM257 335h1v1h-1zM261 338h1v1h-1zM265 338h1v1h-1zM269 346h1v1h-1zM273 353h1v1h-1zM277 361h1v1h-1zM281 420h1v1h-1zM285 418h1v1h-1zM289 413h1v1h-1zM293 408h1v1h-1zM297 400h1v1h-1zM301 391h1v1h-1zM305 377h1v1h-1zM309 366h1v1h-1zM313 355h1v1h-1zM317 345h1v1h-1zM321 337h1v1h-1zM325 258h1v1h-1zM329 343h1v1h-1zM333 343h1v1h-1zM337 341h1v1h-1zM341 339h1v1h-1zM345 336h1v1h-1zM349 333h1v1h-1zM353 330h1v1h-1zM357 325h1v1h-1zM361 321h1v1h-1zM365 316h1v1h-1zM369 312h1v1h-1zM373 308h1v1h-1zM377 305h1v1h-1zM381 302h1v1h-1zM385 295h1v1h-1zM389 293h1v1h-1zM393 285h1v1h-1zM397 276h1v1h-1zM401 268h1v1h-1zM405 261h1v1h-1zM409 255h1v1h-1zM413 209h1v1h-1zM417 210h1v1h-1zM421 212h1v1h-1zM425 280h1v1h-1zM429 278h1v1h-1zM433 277h1v1h-1zM437 276h1v1h-1zM441 274h1v1h-1zM445 273h1v1h-1zM449 272h1v1h-1zM453 267h1v1h-1zM457 260h1v1h-1zM461 254h1v1h-1zM465 248h1v1h-1zM469 242h1v1h-1zM473 237h1v1h-1zM477 232h1v1h-1zM481 227h1v1h-1zM485 153h1v1h-1zM489 155h1v1h-1zM493 158h1v1h-1zM497 161h1v1h-1zM501 164h1v1h-1zM505 166h1v1h-1zM509 231h1v1h-1zM513 166h1v1h-1zM517 166h1v1h-1zM521 168h1v1h-1zM525 263h1v1h-1zM529 261h1v1h-1zM533 259h1v1h-1zM537 257h1v1h-1zM541 255h1v1h-1zM545 253h1v1h-1zM549 249h1v1h-1zM553 151h1v1h-1zM557 154h1v1h-1zM561 156h1v1h-1zM565 158h1v1h-1zM569 161h1v1h-1zM573 166h1v1h-1zM577 174h1v1h-1zM581 181h1v1h-1zM585 188h1v1h-1zM589 198h1v1h-1zM593 206h1v1h-1zM597 214h1v1h-1zM601 221h1v1h-1zM605 230h1v1h-1zM609 237h1v1h-1zM613 244h1v1h-1zM617 253h1v1h-1zM621 260h1v1h-1zM625 315h1v1h-1zM629 314h1v1h-1zM633 312h1v1h-1zM637 310h1v1h-1zM641 309h1v1h-1zM645 308h1v1h-1zM649 306h1v1h-1zM653 301h1v1h-1zM657 297h1v1h-1zM661 292h1v1h-1zM665 288h1v1h-1zM669 284h1v1h-1zM673 278h1v1h-1zM677 269h1v1h-1zM681 261h1v1h-1zM685 254h1v1h-1zM689 247h1v1h-1zM693 241h1v1h-1zM697 170h1v1h-1zM701 172h1v1h-1zM705 173h1v1h-1zM709 175h1v1h-1zM713 250h1v1h-1zM717 248h1v1h-1zM721 245h1v1h-1zM725 240h1v1h-1zM729 232h1v1h-1zM733 222h1v1h-1zM737 212h1v1h-1zM741 204h1v1h-1zM745 130h1v1h-1zM749 131h1v1h-1zM753 136h1v1h-1zM757 142h1v1h-1zM761 151h1v1h-1zM765 158h1v1h-1zM769 166h1v1h-1zM773 172h1v1h-1zM777 178h1v1h-1zM781 186h1v1h-1zM785 193h1v1h-1z"/>
<path fill="#ff0000" d="M6 545h2v1h-2zM272 545h2v1h-2zM295 545h1v1h-1zM572 545h2v1h-2zM662 545h2v1h-2zM777 545h1v1h-1zM327 525h1v1h-1zM331 525h3v1h-3zM427 525h3v1h-3zM463 525h3v1h-3zM499 525h3v1h-3zM35 552h3v1h-3zM195 552h1v1h-1zM655 552h1v1h-1zM119 582h2v1h-2zM169 582h1v1h-1zM218 532h2v1h-2zM247 532h3v1h-3zM511 532h2v1h-2zM685 532h2v1h-2zM703 532h3v1h-3zM727 532h3v1h-3zM757 532h1v1h-1zM303 539h1v1h-1zM560 539h2v1h-2zM223 530h3v1h-3zM241 530h2v1h-2zM314 530h2v1h-2zM440 530h2v1h-2zM447 530h1v1h-1zM735 530h1v1h-1zM751 530h3v1h-3zM59 558h3v1h-3zM189 558h1v1h-1zM79 564h1v1h-1zM184 564h1v1h-1zM595 564h1v1h-1zM638 564h2v1h-2zM211 537h2v1h-2zM259 537h1v1h-1zM523 537h3v1h-3zM541 537h3v1h-3zM547 537h3v1h-3zM553 537h3v1h-3zM674 537h2v1h-2zM764 537h2v1h-2zM243 531h1v1h-1zM313 531h1v1h-1zM445 531h2v1h-2zM687 531h1v1h-1zM691 531h3v1h-3zM697 531h3v1h-3zM733 531h2v1h-2zM89 566h1v1h-1zM183 566h1v1h-1zM71 562h3v1h-3zM591 562h1v1h-1zM90 567h2v1h-2zM601 567h2v1h-2zM631 567h3v1h-3zM207 540h1v1h-1zM265 540h1v1h-1zM302 540h1v1h-1zM565 540h1v1h-1zM769 540h1v1h-1zM65 560h2v1h-2zM187 560h1v1h-1zM589 560h1v1h-1zM645 560h1v1h-1zM343 523h3v1h-3zM349 523h2v1h-2zM421 523h2v1h-2zM470 523h2v1h-2zM494 523h2v1h-2zM83 565h3v1h-3zM183 565h1v1h-1zM596 565h2v1h-2zM637 565h1v1h-1zM361 520h3v1h-3zM367 520h3v1h-3zM481 520h3v1h-3zM351 522h1v1h-1zM379 522h3v1h-3zM385 522h3v1h-3zM391 522h3v1h-3zM397 522h3v1h-3zM415 522h3v1h-3zM493 522h1v1h-1zM229 529h3v1h-3zM235 529h3v1h-3zM439 529h1v1h-1zM451 529h3v1h-3zM506 529h2v1h-2zM739 529h3v1h-3zM745 529h3v1h-3zM108 575h2v1h-2zM139 594h1v1h-1zM143 594h3v1h-3zM149 594h2v1h-2zM67 561h1v1h-1zM590 561h1v1h-1zM643 561h2v1h-2zM47 555h3v1h-3zM583 555h1v1h-1zM651 555h1v1h-1zM206 541h1v1h-1zM266 541h1v1h-1zM301 541h1v1h-1zM566 541h1v1h-1zM669 541h1v1h-1zM770 541h2v1h-2zM320 527h2v1h-2zM433 527h2v1h-2zM458 527h2v1h-2zM113 578h1v1h-1zM173 578h1v1h-1zM131 590h2v1h-2zM161 590h1v1h-1zM260 538h2v1h-2zM529 538h3v1h-3zM535 538h3v1h-3zM559 538h1v1h-1zM673 538h1v1h-1zM253 534h1v1h-1zM309 534h1v1h-1zM679 534h2v1h-2zM715 534h3v1h-3zM721 534h2v1h-2zM759 534h1v1h-1zM41 553h2v1h-2zM194 553h1v1h-1zM155 592h3v1h-3zM337 524h3v1h-3zM423 524h1v1h-1zM469 524h1v1h-1zM254 535h2v1h-2zM308 535h1v1h-1zM517 535h1v1h-1zM126 587h2v1h-2zM319 528h1v1h-1zM435 528h1v1h-1zM457 528h1v1h-1zM505 528h1v1h-1zM95 569h3v1h-3zM607 569h3v1h-3zM626 569h2v1h-2zM205 542h1v1h-1zM267 542h1v1h-1zM567 542h1v1h-1zM667 542h2v1h-2zM31 551h1v1h-1zM579 551h1v1h-1zM656 551h1v1h-1zM213 536h1v1h-1zM307 536h1v1h-1zM518 536h2v1h-2zM763 536h1v1h-1zM355 521h3v1h-3zM373 521h3v1h-3zM403 521h3v1h-3zM409 521h3v1h-3zM475 521h3v1h-3zM487 521h3v1h-3zM11 547h3v1h-3zM200 547h1v1h-1zM278 547h2v1h-2zM290 547h2v1h-2zM101 571h1v1h-1zM179 571h1v1h-1zM17 548h3v1h-3zM199 548h1v1h-1zM283 548h3v1h-3zM289 548h1v1h-1zM781 548h3v1h-3zM23 549h3v1h-3zM577 549h1v1h-1zM137 593h2v1h-2zM151 593h1v1h-1zM179 570h1v1h-1zM613 570h3v1h-3zM619 570h3v1h-3zM625 570h1v1h-1zM121 583h1v1h-1zM168 583h1v1h-1zM325 526h2v1h-2zM77 563h2v1h-2zM217 533h1v1h-1zM513 533h1v1h-1zM681 533h1v1h-1zM709 533h3v1h-3zM723 533h1v1h-1zM758 533h1v1h-1zM53 556h2v1h-2zM584 556h1v1h-1zM650 556h1v1h-1zM114 579h2v1h-2zM175 576h1v1h-1zM201 546h1v1h-1zM277 546h1v1h-1zM661 546h1v1h-1zM5 544h1v1h-1zM271 544h1v1h-1zM296 544h2v1h-2zM571 544h1v1h-1zM775 544h2v1h-2zM163 588h1v1h-1zM55 557h1v1h-1zM585 557h1v1h-1zM649 557h1v1h-1zM102 572h2v1h-2zM178 572h1v1h-1zM29 550h2v1h-2zM578 550h1v1h-1zM657 550h1v1h-1zM43 554h1v1h-1zM193 554h1v1h-1zM188 559h1v1h-1zM133 591h1v1h-1zM107 574h1v1h-1zM167 584h1v1h-1zM125 586h1v1h-1zM174 577h1v1h-1zM162 589h1v1h-1zM603 568h1v1h-1z"/>
<path fill="#1e90ff" d="M26 640h1v1h-1zM41 640h6v1h-6zM155 640h1v1h-1zM257 640h1v1h-1zM267 640h3v1h-3zM511 640h1v1h-1zM514 640h1v1h-1zM551 640h1v1h-1zM556 640h2v1h-2zM617 640h1v1h-1zM622 640h1v1h-1zM750 640h2v1h-2zM759 640h4v1h-4zM777 640h5v1h-5zM11 634h11v1h-11zM156 634h1v1h-1zM222 634h2v1h-2zM227 634h4v1h-4zM243 634h1v1h-1zM254 634h1v1h-1zM279 634h1v1h-1zM412 634h1v1h-1zM422 634h1v1h-1zM445 634h1v1h-1zM483 634h1v1h-1zM492 634h3v1h-3zM503 634h3v1h-3zM518 634h1v1h-1zM547 634h1v1h-1zM625 634h1v1h-1zM700 634h3v1h-3zM707 634h3v1h-3zM743 634h1v1h-1zM157 633h1v1h-1zM220 633h2v1h-2zM243 633h1v1h-1zM248 633h2v1h-2zM254 633h1v1h-1zM279 633h1v1h-1zM411 633h1v1h-1zM422 633h1v1h-1zM444 633h2v1h-2zM482 633h1v1h-1zM495 633h8v1h-8zM519 633h1v1h-1zM546 633h1v1h-1zM625 633h2v1h-2zM677 633h10v1h-10zM698 633h2v1h-2zM710 633h1v1h-1zM742 633h1v1h-1zM175 630h2v1h-2zM183 630h3v1h-3zM217 630h1v1h-1zM282 630h1v1h-1zM305 630h2v1h-2zM322 630h1v1h-1zM363 630h1v1h-1zM372 630h2v1h-2zM408 630h2v1h-2zM424 630h1v1h-1zM442 630h1v1h-1zM446 630h1v1h-1zM478 630h1v1h-1zM520 630h1v1h-1zM527 630h4v1h-4zM535 630h7v1h-7zM646 630h1v1h-1zM675 630h1v1h-1zM711 630h1v1h-1zM734 630h1v1h-1zM28 642h1v1h-1zM38 642h1v1h-1zM54 642h1v1h-1zM67 642h3v1h-3zM154 642h1v1h-1zM513 642h1v1h-1zM553 642h1v1h-1zM560 642h7v1h-7zM570 642h1v1h-1zM591 642h8v1h-8zM615 642h1v1h-1zM620 642h2v1h-2zM784 642h2v1h-2zM196 626h3v1h-3zM215 626h1v1h-1zM287 626h4v1h-4zM295 626h4v1h-4zM302 626h1v1h-1zM328 626h3v1h-3zM335 626h3v1h-3zM351 626h4v1h-4zM358 626h2v1h-2zM379 626h1v1h-1zM396 626h3v1h-3zM448 626h1v1h-1zM467 626h3v1h-3zM649 626h18v1h-18zM670 626h1v1h-1zM719 626h2v1h-2zM730 626h1v1h-1zM5 639h1v1h-1zM25 639h1v1h-1zM155 639h1v1h-1zM256 639h1v1h-1zM270 639h2v1h-2zM511 639h1v1h-1zM515 639h1v1h-1zM551 639h1v1h-1zM622 639h1v1h-1zM749 639h1v1h-1zM763 639h3v1h-3zM776 639h1v1h-1zM199 625h4v1h-4zM214 625h1v1h-1zM291 625h4v1h-4zM299 625h3v1h-3zM331 625h4v1h-4zM355 625h3v1h-3zM380 625h1v1h-1zM394 625h2v1h-2zM448 625h1v1h-1zM455 625h12v1h-12zM667 625h3v1h-3zM721 625h1v1h-1zM729 625h1v1h-1zM188 628h6v1h-6zM216 628h1v1h-1zM284 628h1v1h-1zM303 628h1v1h-1zM325 628h1v1h-1zM340 628h3v1h-3zM362 628h1v1h-1zM376 628h2v1h-2zM403 628h3v1h-3zM425 628h6v1h-6zM447 628h1v1h-1zM471 628h2v1h-2zM648 628h1v1h-1zM673 628h1v1h-1zM712 628h1v1h-1zM715 628h3v1h-3zM732 628h1v1h-1zM9 635h2v1h-2zM22 635h1v1h-1zM156 635h1v1h-1zM224 635h3v1h-3zM231 635h8v1h-8zM242 635h1v1h-1zM255 635h1v1h-1zM278 635h1v1h-1zM413 635h2v1h-2zM419 635h3v1h-3zM484 635h1v1h-1zM490 635h2v1h-2zM506 635h1v1h-1zM518 635h1v1h-1zM547 635h1v1h-1zM624 635h1v1h-1zM703 635h4v1h-4zM744 635h1v1h-1zM157 632h6v1h-6zM167 632h7v1h-7zM218 632h2v1h-2zM244 632h1v1h-1zM246 632h2v1h-2zM250 632h2v1h-2zM253 632h1v1h-1zM280 632h1v1h-1zM311 632h8v1h-8zM365 632h5v1h-5zM411 632h1v1h-1zM423 632h1v1h-1zM443 632h1v1h-1zM446 632h1v1h-1zM481 632h1v1h-1zM519 632h1v1h-1zM544 632h2v1h-2zM627 632h19v1h-19zM676 632h1v1h-1zM687 632h11v1h-11zM710 632h1v1h-1zM737 632h5v1h-5zM27 641h1v1h-1zM39 641h2v1h-2zM47 641h7v1h-7zM155 641h1v1h-1zM257 641h10v1h-10zM512 641h1v1h-1zM514 641h1v1h-1zM552 641h1v1h-1zM554 641h2v1h-2zM558 641h2v1h-2zM567 641h3v1h-3zM616 641h1v1h-1zM618 641h2v1h-2zM621 641h1v1h-1zM752 641h7v1h-7zM782 641h2v1h-2zM194 627h2v1h-2zM215 627h1v1h-1zM285 627h2v1h-2zM303 627h1v1h-1zM326 627h2v1h-2zM338 627h2v1h-2zM343 627h8v1h-8zM360 627h2v1h-2zM378 627h1v1h-1zM399 627h4v1h-4zM447 627h1v1h-1zM470 627h1v1h-1zM648 627h1v1h-1zM671 627h2v1h-2zM713 627h2v1h-2zM718 627h1v1h-1zM731 627h1v1h-1zM203 624h8v1h-8zM214 624h1v1h-1zM381 624h1v1h-1zM391 624h3v1h-3zM448 624h1v1h-1zM452 624h3v1h-3zM722 624h1v1h-1zM727 624h2v1h-2zM75 646h2v1h-2zM79 646h4v1h-4zM91 646h4v1h-4zM153 646h1v1h-1zM576 646h3v1h-3zM586 646h1v1h-1zM8 636h1v1h-1zM23 636h1v1h-1zM156 636h1v1h-1zM239 636h3v1h-3zM255 636h1v1h-1zM276 636h2v1h-2zM415 636h4v1h-4zM485 636h5v1h-5zM507 636h2v1h-2zM517 636h1v1h-1zM548 636h1v1h-1zM624 636h1v1h-1zM745 636h1v1h-1zM771 636h3v1h-3zM98 649h1v1h-1zM151 649h1v1h-1zM163 631h4v1h-4zM174 631h1v1h-1zM217 631h1v1h-1zM245 631h1v1h-1zM252 631h2v1h-2zM281 631h1v1h-1zM307 631h4v1h-4zM319 631h3v1h-3zM364 631h1v1h-1zM370 631h2v1h-2zM410 631h1v1h-1zM423 631h1v1h-1zM443 631h1v1h-1zM446 631h1v1h-1zM479 631h2v1h-2zM520 631h1v1h-1zM531 631h4v1h-4zM542 631h2v1h-2zM646 631h1v1h-1zM675 631h1v1h-1zM711 631h1v1h-1zM735 631h2v1h-2zM177 629h6v1h-6zM186 629h2v1h-2zM216 629h1v1h-1zM283 629h1v1h-1zM304 629h1v1h-1zM323 629h2v1h-2zM363 629h1v1h-1zM374 629h2v1h-2zM406 629h2v1h-2zM424 629h1v1h-1zM431 629h11v1h-11zM447 629h1v1h-1zM473 629h5v1h-5zM521 629h6v1h-6zM647 629h1v1h-1zM674 629h1v1h-1zM712 629h1v1h-1zM733 629h1v1h-1zM131 654h3v1h-3zM31 644h4v1h-4zM57 644h2v1h-2zM72 644h2v1h-2zM154 644h1v1h-1zM573 644h1v1h-1zM588 644h1v1h-1zM602 644h2v1h-2zM611 644h3v1h-3zM101 653h30v1h-30zM134 653h2v1h-2zM139 653h3v1h-3zM74 645h1v1h-1zM83 645h8v1h-8zM154 645h1v1h-1zM574 645h2v1h-2zM587 645h1v1h-1zM604 645h7v1h-7zM100 652h1v1h-1zM136 652h3v1h-3zM142 652h2v1h-2zM29 643h2v1h-2zM35 643h3v1h-3zM55 643h2v1h-2zM59 643h8v1h-8zM70 643h2v1h-2zM154 643h1v1h-1zM571 643h2v1h-2zM589 643h2v1h-2zM599 643h3v1h-3zM614 643h1v1h-1zM6 638h1v1h-1zM24 638h1v1h-1zM155 638h1v1h-1zM256 638h1v1h-1zM272 638h2v1h-2zM510 638h1v1h-1zM516 638h1v1h-1zM550 638h1v1h-1zM623 638h1v1h-1zM747 638h2v1h-2zM766 638h2v1h-2zM775 638h1v1h-1zM100 651h1v1h-1zM144 651h6v1h-6zM77 647h2v1h-2zM95 647h3v1h-3zM153 647h1v1h-1zM579 647h7v1h-7zM384 622h3v1h-3zM449 622h1v1h-1zM725 622h1v1h-1zM211 623h3v1h-3zM382 623h2v1h-2zM387 623h4v1h-4zM449 623h3v1h-3zM723 623h2v1h-2zM726 623h1v1h-1zM7 637h1v1h-1zM23 637h1v1h-1zM156 637h1v1h-1zM255 637h1v1h-1zM274 637h2v1h-2zM509 637h1v1h-1zM516 637h1v1h-1zM549 637h1v1h-1zM623 637h1v1h-1zM746 637h1v1h-1zM768 637h3v1h-3zM774 637h1v1h-1zM99 650h1v1h-1zM150 650h1v1h-1zM98 648h1v1h-1zM152 648h1v1h-1z"/>
<path d="M781 105h10l-5 5z" fill="#8f9aa8"/>
<path d="M5 663v5h5z" fill="#7f9ab0"/>
<rect x="985" y="261" width="34" height="10" fill="#fff"/>
<g shape-rendering="auto" text-rendering="geometricPrecision" stroke="#fff" stroke-width=".3" paint-order="stroke"><text x="8.5" y="116.2" fill="#fff">EURUSD,H4&#160; 1.2787 1.2787 1.2756 1.2759</text><text x="8.5" y="525.2" fill="#fff">MACD(12,26,9) -0.00135 -0.00050</text><text x="8.5" y="616.2" fill="#fff">RSI(14) 38.4163</text><text x="988.5" y="131.4" fill="#fff" font-size="9px">1.2940</text><text x="988.5" y="166.4" fill="#fff" font-size="9px">1.2895</text><text x="988.5" y="200.4" fill="#fff" font-size="9px">1.2850</text><text x="988.5" y="234.4" fill="#fff" font-size="9px">1.2805</text><text x="988.5" y="302.4" fill="#fff" font-size="9px">1.2715</text><text x="988.5" y="337.4" fill="#fff" font-size="9px">1.2670</text><text x="988.5" y="371.4" fill="#fff" font-size="9px">1.2625</text><text x="988.5" y="405.4" fill="#fff" font-size="9px">1.2580</text><text x="988.5" y="439.4" fill="#fff" font-size="9px">1.2535</text><text x="988.5" y="473.4" fill="#fff" font-size="9px">1.2490</text><text x="988.5" y="508.4" fill="#fff" font-size="9px">1.2445</text><text x="988.5" y="269.4" fill="#000" stroke="#000" font-size="9px">1.2759</text><text x="986" y="522.2" fill="#fff" font-size="9px">0.00385</text><text x="986" y="550.4" fill="#fff" font-size="9px">0.00</text><text x="985" y="597.2" fill="#fff" font-size="9px">-0.00594</text><text x="986.5" y="613.2" fill="#fff" font-size="9px">100</text><text x="985" y="626.4" fill="#fff" font-size="9px">70</text><text x="985" y="651.2" fill="#fff" font-size="9px">30</text><text x="985.5" y="665.2" fill="#fff" font-size="9px">0</text><text x="5" y="681" fill="#fff" font-size="9px">11 Jul 2006</text><text x="69" y="681" fill="#fff" font-size="9px">14 Jul 04:00</text><text x="133" y="681" fill="#fff" font-size="9px">18 Jul 16:00</text><text x="197" y="681" fill="#fff" font-size="9px">21 Jul 08:00</text><text x="261" y="681" fill="#fff" font-size="9px">25 Jul 20:00</text><text x="325" y="681" fill="#fff" font-size="9px">28 Jul 12:00</text><text x="389" y="681" fill="#fff" font-size="9px">2 Aug 00:00</text><text x="453" y="681" fill="#fff" font-size="9px">4 Aug 16:00</text><text x="517" y="681" fill="#fff" font-size="9px">9 Aug 04:00</text><text x="581" y="681" fill="#fff" font-size="9px">11 Aug 20:00</text><text x="645" y="681" fill="#fff" font-size="9px">16 Aug 08:00</text><text x="709" y="681" fill="#fff" font-size="9px">20 Aug 23:00</text><text x="773" y="681" fill="#fff" font-size="9px">23 Aug 12:00</text></g>
</svg>
<div id="term" class="abs" style="left:0;top:687px;width:1024px;height:30px">
 <svg class="abs" style="left:2px;top:5px" width="10" height="22" shape-rendering="crispEdges"><path d="M1 1l6 6M7 1l-6 6" stroke="#000" stroke-width="1.6" shape-rendering="auto"/><path d="M2 12h6M2 14h6M2 16h6M2 18h6" stroke="#aaa"/></svg>
 <div class="abs" style="left:15px;top:4px;width:1007px;height:23px;background:#fff;border-top:1px solid #aca899;border-left:1px solid #aca899;box-sizing:border-box"></div>
 <div class="abs" style="left:21px;top:11px;width:8px;height:8px;border-radius:4px;background:radial-gradient(#ddd,#888)"></div>
 <div class="abs tx" style="left:36px;top:9px;font-weight:normal">Balance: 1 000 000  Profit/Loss: 0  Equity: 1 000 000  Free margin: 1 000 000</div>
</div>
<div class="abs" style="left:0;top:718px;width:1024px;height:1px;background:#c9c5b2"></div>
<div class="abs" style="left:0;top:719px;width:1024px;height:1px;background:#fff"></div>
<div class="abs st" style="left:2px">For Help, press F1</div><div class="abs sv" style="left:152px"></div>
<div class="abs st" style="left:158px">Default</div><div class="abs sv" style="left:316px"></div>
<div class="abs st" style="left:322px">2006.08.21 20:00</div><div class="abs sv" style="left:432px"></div>
<div class="abs st" style="left:438px">O: 1.2904</div><div class="abs sv" style="left:518px"></div>
<div class="abs st" style="left:524px">H: 1.2904</div><div class="abs sv" style="left:604px"></div>
<div class="abs st" style="left:610px">L: 1.2883</div><div class="abs sv" style="left:690px"></div>
<div class="abs st" style="left:696px">C: 1.2884</div><div class="abs sv" style="left:776px"></div>
<div class="abs st" style="left:782px">V: 926</div><div class="abs sv" style="left:862px"></div>
<svg class="abs" style="left:868px;top:723px" width="24" height="12" shape-rendering="crispEdges"><g fill="#4a7a10"><rect x="0" y="0" width="2" height="9"/><rect x="3" y="0" width="2" height="8"/><rect x="6" y="0" width="2" height="7"/><rect x="9" y="0" width="2" height="6"/><rect x="12" y="0" width="2" height="5"/><rect x="15" y="0" width="2" height="4"/><rect x="18" y="0" width="2" height="3"/><rect x="21" y="0" width="2" height="2"/></g><g fill="#b02018"><rect x="0" y="10" width="2" height="2"/><rect x="3" y="9" width="2" height="3"/><rect x="6" y="8" width="2" height="4"/><rect x="9" y="7" width="2" height="5"/><rect x="12" y="6" width="2" height="6"/><rect x="15" y="5" width="2" height="7"/><rect x="18" y="4" width="2" height="8"/><rect x="21" y="3" width="2" height="9"/></g></svg>
<div class="abs st" style="left:920px">24/0 kb</div>
<svg class="abs" style="left:1010px;top:725px" width="13" height="13"><path d="M12 1L1 12M12 5L5 12M12 9L9 12" stroke="#aca899" stroke-width="1.5"/></svg>
<div class="abs" style="left:0;top:738px;width:1024px;height:4px;background:linear-gradient(#3a80f0,#245edb 2px,#2460de)"></div>
<div class="abs" style="left:0;top:738px;width:93px;height:4px;background:linear-gradient(#6cb860,#3c9a3c);border-radius:0 4px 0 0"></div>
<div class="abs" style="left:876px;top:738px;width:148px;height:4px;background:linear-gradient(#30b0f8,#1290e8)"></div>
</div>
</body></html>
